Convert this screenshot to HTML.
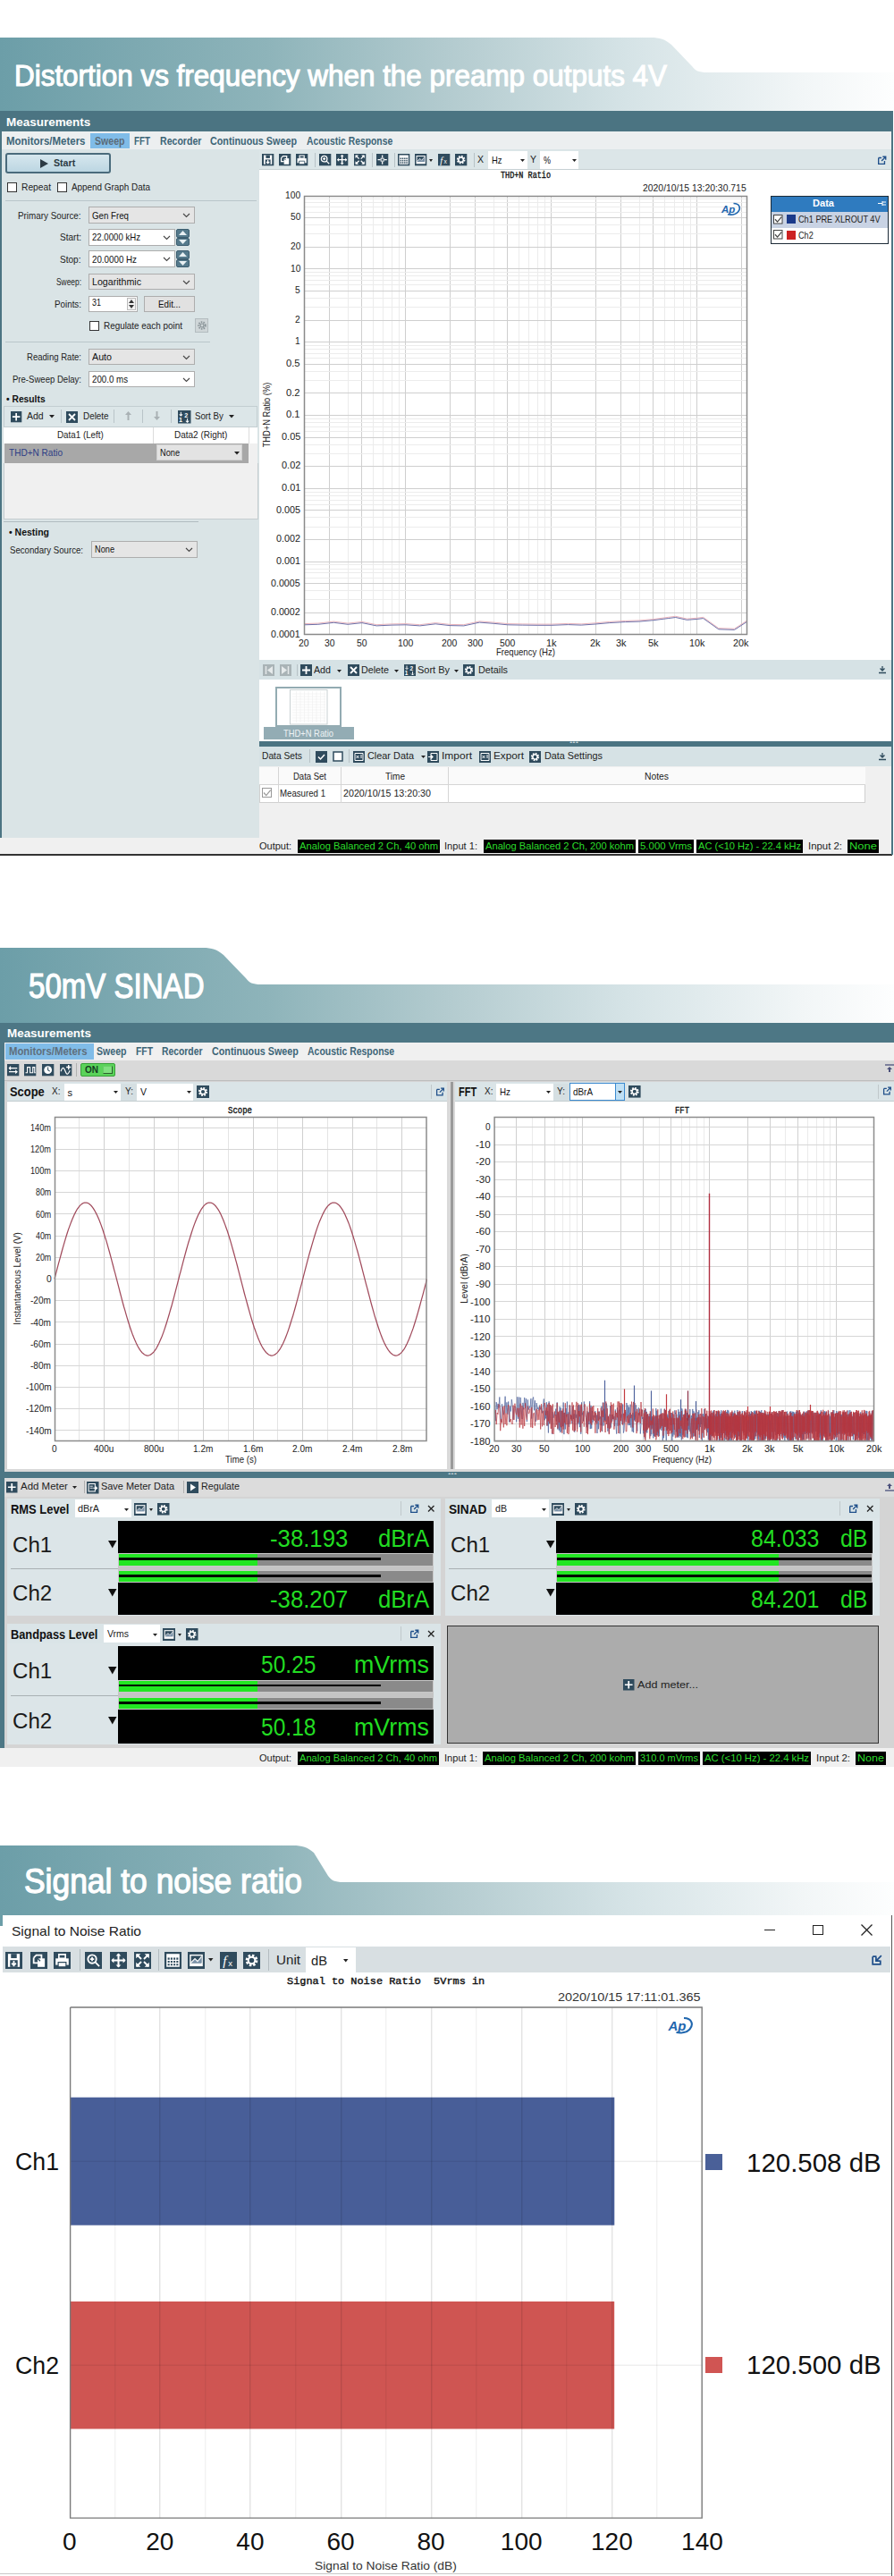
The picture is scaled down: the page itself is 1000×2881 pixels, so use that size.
<!DOCTYPE html><html><head><meta charset="utf-8"><style>
html,body{margin:0;padding:0;background:#fff;}
body{width:1000px;height:2881px;position:relative;overflow:hidden;font-family:"Liberation Sans",sans-serif;}
</style></head><body>
<svg style="position:absolute;left:0px;top:0px;overflow:visible;pointer-events:none" width="1000" height="2881" viewBox="0 0 1000 2881"><defs><linearGradient id="g1" x1="0" y1="0" x2="1000" y2="0" gradientUnits="userSpaceOnUse">
<stop offset="0" stop-color="#6c9ea8"/><stop offset="0.3" stop-color="#8eb4ba"/><stop offset="0.5" stop-color="#b3cbcf"/><stop offset="0.7" stop-color="#d5e3e6"/><stop offset="0.9" stop-color="#f2f6f7"/><stop offset="1" stop-color="#fdfefe"/></linearGradient></defs>
<path d="M0,42 L728,42 C738,42 744,44 751,50 L774,74 C778,79 781,81 791,81 L1000,81 L1000,125 L0,125 Z" fill="url(#g1)"/></svg>
<div style="position:absolute;left:16.00px;top:68.25px;font:400 33.5px 'Liberation Sans',sans-serif;line-height:1;white-space:pre;color:#fff;transform:scaleX(0.9379);transform-origin:0 0;-webkit-text-stroke:1.1px #fff;">Distortion vs frequency when the preamp outputs 4V</div>
<svg style="position:absolute;left:0px;top:0px;overflow:visible;pointer-events:none" width="1000" height="2881" viewBox="0 0 1000 2881"><defs><linearGradient id="g2" x1="0" y1="0" x2="1000" y2="0" gradientUnits="userSpaceOnUse">
<stop offset="0" stop-color="#6c9ea8"/><stop offset="0.3" stop-color="#8eb4ba"/><stop offset="0.5" stop-color="#b3cbcf"/><stop offset="0.7" stop-color="#d5e3e6"/><stop offset="0.9" stop-color="#f2f6f7"/><stop offset="1" stop-color="#fdfefe"/></linearGradient></defs>
<path d="M0,1060 L227,1060 C237,1060 243,1062 250,1068 L275,1094 C279,1099 282,1101 292,1101 L1000,1101 L1000,1145 L0,1145 Z" fill="url(#g2)"/></svg>
<div style="position:absolute;left:31.50px;top:1083.00px;font:400 39px 'Liberation Sans',sans-serif;line-height:1;white-space:pre;color:#fff;transform:scaleX(0.8473);transform-origin:0 0;-webkit-text-stroke:1.25px #fff;">50mV SINAD</div>
<svg style="position:absolute;left:0px;top:0px;overflow:visible;pointer-events:none" width="1000" height="2881" viewBox="0 0 1000 2881"><defs><linearGradient id="g3" x1="0" y1="0" x2="1000" y2="0" gradientUnits="userSpaceOnUse">
<stop offset="0" stop-color="#6c9ea8"/><stop offset="0.3" stop-color="#8eb4ba"/><stop offset="0.5" stop-color="#b3cbcf"/><stop offset="0.7" stop-color="#d5e3e6"/><stop offset="0.9" stop-color="#f2f6f7"/><stop offset="1" stop-color="#fdfefe"/></linearGradient></defs>
<path d="M0,2064 L328,2064 C338,2064 344,2066 351,2072 L367,2098 C371,2103 374,2105 384,2105 L1000,2105 L1000,2142 L0,2142 Z" fill="url(#g3)"/></svg>
<div style="position:absolute;left:27.00px;top:2084.00px;font:400 39px 'Liberation Sans',sans-serif;line-height:1;white-space:pre;color:#fff;transform:scaleX(0.9079);transform-origin:0 0;-webkit-text-stroke:1.25px #fff;">Signal to noise ratio</div>
<div style="position:absolute;left:0px;top:124px;width:998px;height:832px;background:#dae4e6;"></div>
<div style="position:absolute;left:0px;top:124px;width:998px;height:23px;background:#4b7482;"></div>
<div style="position:absolute;left:7.40px;top:130.40px;font:700 13.2px 'Liberation Sans',sans-serif;line-height:1;white-space:pre;color:#fff;transform:scaleX(1.0210);transform-origin:0 0;">Measurements</div>
<div style="position:absolute;left:2px;top:147px;width:996px;height:20px;background:#eceff0;"></div>
<div style="position:absolute;left:101.4px;top:148.5px;width:43.6px;height:17.5px;background:#80bce8;"></div>
<div style="position:absolute;left:7.20px;top:151.70px;font:700 12.2px 'Liberation Sans',sans-serif;line-height:1;white-space:pre;color:#3d6577;transform:scaleX(0.9401);transform-origin:0 0;">Monitors/Meters</div>
<div style="position:absolute;left:105.50px;top:151.70px;font:700 12.2px 'Liberation Sans',sans-serif;line-height:1;white-space:pre;color:#5b6b78;transform:scaleX(0.8673);transform-origin:0 0;">Sweep</div>
<div style="position:absolute;left:150.00px;top:151.70px;font:700 12.2px 'Liberation Sans',sans-serif;line-height:1;white-space:pre;color:#3d6577;transform:scaleX(0.8056);transform-origin:0 0;">FFT</div>
<div style="position:absolute;left:178.60px;top:151.70px;font:700 12.2px 'Liberation Sans',sans-serif;line-height:1;white-space:pre;color:#3d6577;transform:scaleX(0.8670);transform-origin:0 0;">Recorder</div>
<div style="position:absolute;left:235.00px;top:151.70px;font:700 12.2px 'Liberation Sans',sans-serif;line-height:1;white-space:pre;color:#3d6577;transform:scaleX(0.8843);transform-origin:0 0;">Continuous Sweep</div>
<div style="position:absolute;left:342.80px;top:151.70px;font:700 12.2px 'Liberation Sans',sans-serif;line-height:1;white-space:pre;color:#3d6577;transform:scaleX(0.8505);transform-origin:0 0;">Acoustic Response</div>
<div style="position:absolute;left:2px;top:167px;width:288px;height:770px;background:#dae4e6;"></div>
<div style="position:absolute;left:6px;top:171px;width:118px;height:23px;background:#c6dce6;border:2px solid #4a6b7c;box-sizing:border-box;border-radius:3px;background:linear-gradient(#d6e7ee,#bcd6e2)"></div>
<svg style="position:absolute;left:44.6px;top:178px;overflow:visible;" width="9" height="10" viewBox="0 0 9 10"><path d="M0,0L9,5L0,10z" fill="#2b3a44"/></svg>
<div style="position:absolute;left:59.70px;top:177.05px;font:700 11.5px 'Liberation Sans',sans-serif;line-height:1;white-space:pre;color:#2b3a44;transform:scaleX(0.9236);transform-origin:0 0;">Start</div>
<svg style="position:absolute;left:7.5px;top:204px;overflow:visible;" width="11" height="11" viewBox="0 0 11 11"><rect x="0.5" y="0.5" width="10" height="10" fill="#fff" stroke="#333" stroke-width="1"/></svg>
<div style="position:absolute;left:23.50px;top:204.05px;font:400 10.5px 'Liberation Sans',sans-serif;line-height:1;white-space:pre;color:#222;transform:scaleX(0.9746);transform-origin:0 0;">Repeat</div>
<svg style="position:absolute;left:63.8px;top:204px;overflow:visible;" width="11" height="11" viewBox="0 0 11 11"><rect x="0.5" y="0.5" width="10" height="10" fill="#fff" stroke="#333" stroke-width="1"/></svg>
<div style="position:absolute;left:80.00px;top:204.05px;font:400 10.5px 'Liberation Sans',sans-serif;line-height:1;white-space:pre;color:#222;transform:scaleX(0.9421);transform-origin:0 0;">Append Graph Data</div>
<div style="position:absolute;left:6px;top:224px;width:281px;height:1px;background:#b9c6ca;"></div>
<div style="position:absolute;left:20.00px;top:235.55px;font:400 10.5px 'Liberation Sans',sans-serif;line-height:1;white-space:pre;color:#222;transform:scaleX(0.9378);transform-origin:0 0;">Primary Source:</div>
<div style="position:absolute;left:99.3px;top:231.4px;width:118.7px;height:19px;background:#e5e5e5;border:1px solid #adadad;box-sizing:border-box;"></div>
<div style="position:absolute;left:103.30px;top:235.65px;font:400 10.5px 'Liberation Sans',sans-serif;line-height:1;white-space:pre;color:#111;transform:scaleX(0.9243);transform-origin:0 0;">Gen Freq</div>
<svg style="position:absolute;left:204.0px;top:238.4px;overflow:visible;" width="9" height="6" viewBox="0 0 9 6"><path d="M1,1l3.5,3.5l3.5,-3.5" fill="none" stroke="#444" stroke-width="1.1"/></svg>
<div style="position:absolute;left:66.60px;top:260.05px;font:400 10.5px 'Liberation Sans',sans-serif;line-height:1;white-space:pre;color:#222;transform:scaleX(0.9564);transform-origin:0 0;">Start:</div>
<div style="position:absolute;left:99.3px;top:256px;width:96.3px;height:19px;background:#fff;border:1px solid #adadad;box-sizing:border-box;"></div>
<div style="position:absolute;left:103.30px;top:260.25px;font:400 10.5px 'Liberation Sans',sans-serif;line-height:1;white-space:pre;color:#111;transform:scaleX(0.9157);transform-origin:0 0;">22.0000 kHz</div>
<svg style="position:absolute;left:181.6px;top:263.0px;overflow:visible;" width="9" height="6" viewBox="0 0 9 6"><path d="M1,1l3.5,3.5l3.5,-3.5" fill="none" stroke="#444" stroke-width="1.1"/></svg>
<div style="position:absolute;left:197.3px;top:256px;width:14.7px;height:9.5px;background:#557a8c;border:1px solid #3d5e70;box-sizing:border-box;border-radius:2px"></div>
<svg style="position:absolute;left:200px;top:258px;overflow:visible;" width="9" height="5" viewBox="0 0 9 5"><path d="M0,5L4.5,0L9,5z" fill="#e8f0f3"/></svg>
<div style="position:absolute;left:197.3px;top:265.5px;width:14.7px;height:9.5px;background:#557a8c;border:1px solid #3d5e70;box-sizing:border-box;border-radius:2px"></div>
<svg style="position:absolute;left:200px;top:268px;overflow:visible;" width="9" height="5" viewBox="0 0 9 5"><path d="M0,0L4.5,5L9,0z" fill="#e8f0f3"/></svg>
<div style="position:absolute;left:67.10px;top:285.25px;font:400 10.5px 'Liberation Sans',sans-serif;line-height:1;white-space:pre;color:#222;transform:scaleX(0.9580);transform-origin:0 0;">Stop:</div>
<div style="position:absolute;left:99.3px;top:280.4px;width:96.3px;height:19px;background:#fff;border:1px solid #adadad;box-sizing:border-box;"></div>
<div style="position:absolute;left:103.30px;top:284.65px;font:400 10.5px 'Liberation Sans',sans-serif;line-height:1;white-space:pre;color:#111;transform:scaleX(0.9308);transform-origin:0 0;">20.0000 Hz</div>
<svg style="position:absolute;left:181.6px;top:287.4px;overflow:visible;" width="9" height="6" viewBox="0 0 9 6"><path d="M1,1l3.5,3.5l3.5,-3.5" fill="none" stroke="#444" stroke-width="1.1"/></svg>
<div style="position:absolute;left:197.3px;top:280.4px;width:14.7px;height:9.5px;background:#557a8c;border:1px solid #3d5e70;box-sizing:border-box;border-radius:2px"></div>
<svg style="position:absolute;left:200px;top:282.4px;overflow:visible;" width="9" height="5" viewBox="0 0 9 5"><path d="M0,5L4.5,0L9,5z" fill="#e8f0f3"/></svg>
<div style="position:absolute;left:197.3px;top:289.9px;width:14.7px;height:9.5px;background:#557a8c;border:1px solid #3d5e70;box-sizing:border-box;border-radius:2px"></div>
<svg style="position:absolute;left:200px;top:292.4px;overflow:visible;" width="9" height="5" viewBox="0 0 9 5"><path d="M0,0L4.5,5L9,0z" fill="#e8f0f3"/></svg>
<div style="position:absolute;left:62.60px;top:309.75px;font:400 10.5px 'Liberation Sans',sans-serif;line-height:1;white-space:pre;color:#222;transform:scaleX(0.7993);transform-origin:0 0;">Sweep:</div>
<div style="position:absolute;left:99.3px;top:306px;width:118.7px;height:18px;background:#e5e5e5;border:1px solid #adadad;box-sizing:border-box;"></div>
<div style="position:absolute;left:103.30px;top:309.75px;font:400 10.5px 'Liberation Sans',sans-serif;line-height:1;white-space:pre;color:#111;transform:scaleX(1.0132);transform-origin:0 0;">Logarithmic</div>
<svg style="position:absolute;left:204.0px;top:312.5px;overflow:visible;" width="9" height="6" viewBox="0 0 9 6"><path d="M1,1l3.5,3.5l3.5,-3.5" fill="none" stroke="#444" stroke-width="1.1"/></svg>
<div style="position:absolute;left:60.60px;top:335.05px;font:400 10.5px 'Liberation Sans',sans-serif;line-height:1;white-space:pre;color:#222;transform:scaleX(0.9343);transform-origin:0 0;">Points:</div>
<div style="position:absolute;left:99.3px;top:331px;width:55px;height:18px;background:#fff;border:1px solid #adadad;box-sizing:border-box;"></div>
<div style="position:absolute;left:102.50px;top:333.25px;font:400 10.5px 'Liberation Sans',sans-serif;line-height:1;white-space:pre;color:#111;transform:scaleX(0.8556);transform-origin:0 0;">31</div>
<div style="position:absolute;left:142px;top:333px;width:10px;height:14px;background:#f3f3f3;border:1px solid #bbb;box-sizing:border-box;"></div>
<svg style="position:absolute;left:144px;top:335px;overflow:visible;" width="6" height="10" viewBox="0 0 6 10"><path d="M0,4L3,0L6,4zM0,6L3,10L6,6z" fill="#333"/></svg>
<div style="position:absolute;left:161px;top:331px;width:57px;height:18px;background:#e1e1e1;border:1px solid #adadad;box-sizing:border-box;"></div>
<div style="position:absolute;left:177.00px;top:334.75px;font:400 10.5px 'Liberation Sans',sans-serif;line-height:1;white-space:pre;color:#111;transform:scaleX(0.9308);transform-origin:0 0;">Edit...</div>
<svg style="position:absolute;left:99.7px;top:358.7px;overflow:visible;" width="11" height="11" viewBox="0 0 11 11"><rect x="0.5" y="0.5" width="10" height="10" fill="#fff" stroke="#333" stroke-width="1"/></svg>
<div style="position:absolute;left:115.80px;top:358.55px;font:400 10.5px 'Liberation Sans',sans-serif;line-height:1;white-space:pre;color:#222;transform:scaleX(0.9421);transform-origin:0 0;">Regulate each point</div>
<div style="position:absolute;left:217.5px;top:356px;width:15.5px;height:16px;background:#cfd6d8;border:1px solid #b3bcbf;box-sizing:border-box;"></div>
<svg style="position:absolute;left:219.5px;top:358px;overflow:visible;" width="12" height="12" viewBox="0 0 12 12"><circle cx="6" cy="6" r="3.8" fill="none" stroke="#8a9599" stroke-width="2" stroke-dasharray="1.5 1.2"/><circle cx="6" cy="6" r="2" fill="none" stroke="#8a9599" stroke-width="1.2"/></svg>
<div style="position:absolute;left:6px;top:382px;width:229px;height:1px;background:#b9c6ca;"></div>
<div style="position:absolute;left:29.60px;top:394.45px;font:400 10.5px 'Liberation Sans',sans-serif;line-height:1;white-space:pre;color:#222;transform:scaleX(0.9085);transform-origin:0 0;">Reading Rate:</div>
<div style="position:absolute;left:99.3px;top:390px;width:118.7px;height:18.4px;background:#e5e5e5;border:1px solid #adadad;box-sizing:border-box;"></div>
<div style="position:absolute;left:103.30px;top:393.95px;font:400 10.5px 'Liberation Sans',sans-serif;line-height:1;white-space:pre;color:#111;transform:scaleX(1.0181);transform-origin:0 0;">Auto</div>
<svg style="position:absolute;left:204.0px;top:396.7px;overflow:visible;" width="9" height="6" viewBox="0 0 9 6"><path d="M1,1l3.5,3.5l3.5,-3.5" fill="none" stroke="#444" stroke-width="1.1"/></svg>
<div style="position:absolute;left:13.60px;top:418.95px;font:400 10.5px 'Liberation Sans',sans-serif;line-height:1;white-space:pre;color:#222;transform:scaleX(0.9099);transform-origin:0 0;">Pre-Sweep Delay:</div>
<div style="position:absolute;left:99.3px;top:414.8px;width:118.7px;height:18.4px;background:#fff;border:1px solid #adadad;box-sizing:border-box;"></div>
<div style="position:absolute;left:103.30px;top:418.75px;font:400 10.5px 'Liberation Sans',sans-serif;line-height:1;white-space:pre;color:#111;transform:scaleX(0.9259);transform-origin:0 0;">200.0 ms</div>
<svg style="position:absolute;left:204.0px;top:421.5px;overflow:visible;" width="9" height="6" viewBox="0 0 9 6"><path d="M1,1l3.5,3.5l3.5,-3.5" fill="none" stroke="#444" stroke-width="1.1"/></svg>
<div style="position:absolute;left:6.70px;top:441.25px;font:700 11.5px 'Liberation Sans',sans-serif;line-height:1;white-space:pre;color:#111;transform:scaleX(0.8941);transform-origin:0 0;">• Results</div>
<div style="position:absolute;left:4px;top:453.6px;width:284px;height:24px;background:#dce6e8;border:1px solid #c3ced1;box-sizing:border-box;"></div>
<svg style="position:absolute;left:12px;top:459.5px;overflow:visible;" width="12.3" height="12.3" viewBox="0 0 12.3 12.3"><g transform="scale(0.9461538461538462)"><rect width="13" height="13" fill="#2f4b5d"/><path d="M6.5,2v9M2,6.5h9" stroke="#fff" stroke-width="1.8"/></g></svg>
<div style="position:absolute;left:30.00px;top:460.25px;font:400 10.5px 'Liberation Sans',sans-serif;line-height:1;white-space:pre;color:#222;">Add</div>
<svg style="position:absolute;left:55px;top:463.5px;overflow:visible;" width="6" height="3.5" viewBox="0 0 6 3.5"><path d="M0,0h6l-3.0,3.5z" fill="#222"/></svg>
<div style="position:absolute;left:67.5px;top:458px;width:1px;height:15px;background:#b9c4c8;"></div>
<svg style="position:absolute;left:74px;top:459.5px;overflow:visible;" width="13" height="13" viewBox="0 0 13 13"><g transform="scale(1.0)"><rect width="13" height="13" fill="#2f4b5d"/><path d="M3,3l7,7M10,3l-7,7" stroke="#fff" stroke-width="1.8"/></g></svg>
<div style="position:absolute;left:93.00px;top:460.25px;font:400 10.5px 'Liberation Sans',sans-serif;line-height:1;white-space:pre;color:#222;transform:scaleX(0.9420);transform-origin:0 0;">Delete</div>
<div style="position:absolute;left:126.5px;top:458px;width:1px;height:15px;background:#b9c4c8;"></div>
<svg style="position:absolute;left:139.5px;top:460px;overflow:visible;" width="7" height="10" viewBox="0 0 7 10"><path d="M3.5,0L7,4H4.5V10H2.5V4H0z" fill="#a9b1b4"/></svg>
<div style="position:absolute;left:159px;top:458px;width:1px;height:15px;background:#b9c4c8;"></div>
<svg style="position:absolute;left:172px;top:460px;overflow:visible;" width="7" height="10" viewBox="0 0 7 10"><path d="M3.5,10L7,6H4.5V0H2.5V6H0z" fill="#a9b1b4"/></svg>
<div style="position:absolute;left:191.4px;top:458px;width:1px;height:15px;background:#b9c4c8;"></div>
<svg style="position:absolute;left:198.5px;top:459px;overflow:visible;" width="14.5" height="14.5" viewBox="0 0 14.5 14.5"><g transform="scale(1.1153846153846154)"><rect width="13" height="13" fill="#2f4b5d"/><text x="0.8" y="11.5" font-family="Liberation Sans" font-size="6.5" font-weight="700" fill="#fff">1</text><text x="6.5" y="6.8" font-family="Liberation Sans" font-size="6.5" font-weight="700" fill="#fff">2</text><path d="M3,1.5v4M1.5,4l1.5,1.5l1.5,-1.5M9.5,8v4M8,10.5l1.5,1.5l1.5,-1.5" fill="none" stroke="#fff" stroke-width="0.9"/></g></svg>
<div style="position:absolute;left:218.00px;top:460.25px;font:400 10.5px 'Liberation Sans',sans-serif;line-height:1;white-space:pre;color:#222;transform:scaleX(0.9234);transform-origin:0 0;">Sort By</div>
<svg style="position:absolute;left:256px;top:463.5px;overflow:visible;" width="6" height="3.5" viewBox="0 0 6 3.5"><path d="M0,0h6l-3.0,3.5z" fill="#222"/></svg>
<div style="position:absolute;left:4px;top:477.5px;width:284px;height:18px;background:#ffffff;"></div>
<div style="position:absolute;left:171.3px;top:477.5px;width:1px;height:18px;background:#dcdcdc;"></div>
<div style="position:absolute;left:278px;top:477.5px;width:1px;height:18px;background:#dcdcdc;"></div>
<div style="position:absolute;left:64.10px;top:481.25px;font:400 10.5px 'Liberation Sans',sans-serif;line-height:1;white-space:pre;color:#222;transform:scaleX(0.9341);transform-origin:0 0;">Data1 (Left)</div>
<div style="position:absolute;left:194.60px;top:481.25px;font:400 10.5px 'Liberation Sans',sans-serif;line-height:1;white-space:pre;color:#222;transform:scaleX(0.9511);transform-origin:0 0;">Data2 (Right)</div>
<div style="position:absolute;left:4px;top:495.5px;width:284px;height:22px;background:#f0f0f0;"></div>
<div style="position:absolute;left:4.9px;top:495.5px;width:273px;height:22px;background:#a8a8a8;"></div>
<div style="position:absolute;left:10.40px;top:501.25px;font:400 10.5px 'Liberation Sans',sans-serif;line-height:1;white-space:pre;color:#2d3d86;transform:scaleX(0.9564);transform-origin:0 0;">THD+N Ratio</div>
<div style="position:absolute;left:175px;top:497.4px;width:95.8px;height:17.8px;background:#e3e3e3;border:1px solid #d0d0d0;box-sizing:border-box;"></div>
<div style="position:absolute;left:179.00px;top:501.05px;font:400 10.5px 'Liberation Sans',sans-serif;line-height:1;white-space:pre;color:#111;transform:scaleX(0.8762);transform-origin:0 0;">None</div>
<svg style="position:absolute;left:262px;top:505px;overflow:visible;" width="6" height="3.5" viewBox="0 0 6 3.5"><path d="M0,0h6l-3.0,3.5z" fill="#222"/></svg>
<div style="position:absolute;left:4px;top:517.5px;width:285px;height:63px;background:#f0f0f0;border:1px solid #c5cdd0;box-sizing:border-box;border-top:none"></div>
<div style="position:absolute;left:4px;top:583.4px;width:218px;height:1px;background:#b0bcc0;"></div>
<div style="position:absolute;left:10.00px;top:590.25px;font:700 11.5px 'Liberation Sans',sans-serif;line-height:1;white-space:pre;color:#111;transform:scaleX(0.9108);transform-origin:0 0;">• Nesting</div>
<div style="position:absolute;left:10.70px;top:610.05px;font:400 10.5px 'Liberation Sans',sans-serif;line-height:1;white-space:pre;color:#222;transform:scaleX(0.9181);transform-origin:0 0;">Secondary Source:</div>
<div style="position:absolute;left:102px;top:605px;width:118.8px;height:19px;background:#e5e5e5;border:1px solid #adadad;box-sizing:border-box;"></div>
<div style="position:absolute;left:106.00px;top:609.25px;font:400 10.5px 'Liberation Sans',sans-serif;line-height:1;white-space:pre;color:#111;transform:scaleX(0.8762);transform-origin:0 0;">None</div>
<svg style="position:absolute;left:206.8px;top:612.0px;overflow:visible;" width="9" height="6" viewBox="0 0 9 6"><path d="M1,1l3.5,3.5l3.5,-3.5" fill="none" stroke="#444" stroke-width="1.1"/></svg>
<div style="position:absolute;left:290px;top:168px;width:708px;height:22px;background:#dce6e8;"></div>
<div style="position:absolute;left:290px;top:189.3px;width:708px;height:1px;background:#c6d0d3;"></div>
<svg style="position:absolute;left:293px;top:172px;overflow:visible;" width="13.3" height="13.3" viewBox="0 0 13.3 13.3"><g transform="scale(1.0230769230769232)"><rect width="13" height="13" fill="#2f4b5d"/><path d="M2,1.5h9v10h-9z" fill="#fff"/><rect x="4.3" y="1.5" width="4.4" height="3.3" fill="#2f4b5d"/><rect x="3.6" y="6.3" width="5.8" height="5.2" fill="#2f4b5d"/><path d="M6.5,6.8v3.6M4.9,8.6l1.6,1.8l1.6,-1.8" fill="none" stroke="#fff" stroke-width="1.2"/></g></svg>
<svg style="position:absolute;left:311.7px;top:172px;overflow:visible;" width="13.3" height="13.3" viewBox="0 0 13.3 13.3"><g transform="scale(1.0230769230769232)"><rect width="13" height="13" fill="#2f4b5d"/><path d="M2.5,4.5l2,-2h4v3" fill="none" stroke="#fff" stroke-width="1.2"/><path d="M2.5,4.5v4h3" fill="none" stroke="#fff" stroke-width="1.2"/><path d="M5.5,5h5.5v6.5h-5.5z" fill="#fff"/><path d="M5.5,5l2,2" stroke="#2f4b5d" stroke-width="0.9"/></g></svg>
<svg style="position:absolute;left:331.4px;top:172px;overflow:visible;" width="13.3" height="13.3" viewBox="0 0 13.3 13.3"><g transform="scale(1.0230769230769232)"><rect width="13" height="13" fill="#2f4b5d"/><path d="M4,2h5v3h-5z" fill="none" stroke="#fff" stroke-width="1.1"/><path d="M1.5,5h10v5h-10z" fill="#fff"/><path d="M3.5,8h6v3.5h-6z" fill="#fff" stroke="#2f4b5d" stroke-width="0.8"/></g></svg>
<svg style="position:absolute;left:357px;top:172px;overflow:visible;" width="13.3" height="13.3" viewBox="0 0 13.3 13.3"><g transform="scale(1.0230769230769232)"><rect width="13" height="13" fill="#2f4b5d"/><circle cx="5.5" cy="5.5" r="3.2" fill="none" stroke="#fff" stroke-width="1.3"/><path d="M8,8l3,3M4,5.5h3M5.5,4v3" stroke="#fff" stroke-width="1.2"/></g></svg>
<svg style="position:absolute;left:376px;top:172px;overflow:visible;" width="13.3" height="13.3" viewBox="0 0 13.3 13.3"><g transform="scale(1.0230769230769232)"><rect width="13" height="13" fill="#2f4b5d"/><path d="M6.5,1.5v10M1.5,6.5h10" stroke="#fff" stroke-width="1.4"/><path d="M6.5,1l-2,2h4zM6.5,12l-2,-2h4zM1,6.5l2,-2v4zM12,6.5l-2,-2v4z" fill="#fff"/></g></svg>
<svg style="position:absolute;left:395.7px;top:172px;overflow:visible;" width="13.3" height="13.3" viewBox="0 0 13.3 13.3"><g transform="scale(1.0230769230769232)"><rect width="13" height="13" fill="#2f4b5d"/><path d="M2,2l3.5,3.5M11,2l-3.5,3.5M2,11l3.5,-3.5M11,11l-3.5,-3.5" stroke="#fff" stroke-width="1.3"/><path d="M1.5,1.5h3.5l-3.5,3.5zM11.5,1.5v3.5l-3.5,-3.5zM1.5,11.5v-3.5l3.5,3.5zM11.5,11.5h-3.5l3.5,-3.5z" fill="#fff"/></g></svg>
<svg style="position:absolute;left:420.5px;top:172px;overflow:visible;" width="13.3" height="13.3" viewBox="0 0 13.3 13.3"><g transform="scale(1.0230769230769232)"><rect width="13" height="13" fill="#2f4b5d"/><path d="M6.5,1.5v3M6.5,8.5v3M1.5,6.5h3M8.5,6.5h3" stroke="#fff" stroke-width="1.3"/><rect x="5" y="5" width="3" height="3" fill="none" stroke="#fff" stroke-width="0.9"/></g></svg>
<svg style="position:absolute;left:444.6px;top:172px;overflow:visible;" width="13.3" height="13.3" viewBox="0 0 13.3 13.3"><g transform="scale(1.0230769230769232)"><rect width="13" height="13" fill="#2f4b5d"/><path d="M2,2h9v9h-9z" fill="none" stroke="#fff" stroke-width="1"/><rect x="2" y="2" width="9" height="2.4" fill="#fff"/><path d="M2,6.4h9M2,8.6h9M4.3,4v7M6.5,4v7M8.7,4v7" stroke="#fff" stroke-width="0.8"/></g></svg>
<svg style="position:absolute;left:463.7px;top:172px;overflow:visible;" width="13.3" height="13.3" viewBox="0 0 13.3 13.3"><g transform="scale(1.0230769230769232)"><rect width="13" height="13" fill="#2f4b5d"/><rect x="1.5" y="2" width="10" height="9" fill="#fff"/><rect x="2.5" y="3" width="8" height="5.5" fill="#2f4b5d"/><path d="M2.5,8.5l3,-3l2,2l3,-3.5v4.5z" fill="#7b93aa"/><path d="M2.5,8.2l3,-3l2,2l3,-3.5" fill="none" stroke="#fff" stroke-width="0.8"/></g></svg>
<svg style="position:absolute;left:490px;top:172px;overflow:visible;" width="13.3" height="13.3" viewBox="0 0 13.3 13.3"><g transform="scale(1.0230769230769232)"><rect width="13" height="13" fill="#2f4b5d"/><text x="2.3" y="10.3" font-family="Liberation Serif" font-style="italic" font-size="10.5" fill="#fff">f</text><text x="6.3" y="10.8" font-family="Liberation Sans" font-size="6.5" fill="#fff">x</text></g></svg>
<svg style="position:absolute;left:509px;top:172px;overflow:visible;" width="13.3" height="13.3" viewBox="0 0 13.3 13.3"><g transform="scale(1.0230769230769232)"><rect width="13" height="13" fill="#2f4b5d"/><circle cx="6.5" cy="6.5" r="3.6" fill="none" stroke="#fff" stroke-width="2.2" stroke-dasharray="1.6 1.2"/><circle cx="6.5" cy="6.5" r="2.6" fill="none" stroke="#fff" stroke-width="1.4"/></g></svg>
<div style="position:absolute;left:352px;top:171px;width:1px;height:16px;background:#b7c2c6;"></div>
<div style="position:absolute;left:416px;top:171px;width:1px;height:16px;background:#b7c2c6;"></div>
<div style="position:absolute;left:441px;top:171px;width:1px;height:16px;background:#b7c2c6;"></div>
<div style="position:absolute;left:530px;top:171px;width:1px;height:16px;background:#b7c2c6;"></div>
<svg style="position:absolute;left:479.5px;top:177.5px;overflow:visible;" width="4" height="3" viewBox="0 0 4 3"><path d="M0,0h4l-2.0,3z" fill="#222"/></svg>
<div style="position:absolute;left:534.00px;top:173.00px;font:400 11px 'Liberation Sans',sans-serif;line-height:1;white-space:pre;color:#222;transform:scaleX(0.9532);transform-origin:0 0;">X</div>
<div style="position:absolute;left:546px;top:169px;width:44px;height:20px;background:#fff;"></div>
<div style="position:absolute;left:549.50px;top:173.75px;font:400 10.5px 'Liberation Sans',sans-serif;line-height:1;white-space:pre;color:#111;transform:scaleX(0.8954);transform-origin:0 0;">Hz</div>
<svg style="position:absolute;left:582px;top:178px;overflow:visible;" width="5" height="3" viewBox="0 0 5 3"><path d="M0,0h5l-2.5,3z" fill="#222"/></svg>
<div style="position:absolute;left:593.00px;top:173.00px;font:400 11px 'Liberation Sans',sans-serif;line-height:1;white-space:pre;color:#222;transform:scaleX(0.9532);transform-origin:0 0;">Y</div>
<div style="position:absolute;left:604.4px;top:169px;width:43px;height:20px;background:#fff;"></div>
<div style="position:absolute;left:607.50px;top:173.75px;font:400 10.5px 'Liberation Sans',sans-serif;line-height:1;white-space:pre;color:#111;transform:scaleX(0.8562);transform-origin:0 0;">%</div>
<svg style="position:absolute;left:640px;top:178px;overflow:visible;" width="5" height="3" viewBox="0 0 5 3"><path d="M0,0h5l-2.5,3z" fill="#222"/></svg>
<svg style="position:absolute;left:981px;top:173.6px;overflow:visible;" width="11" height="11" viewBox="0 0 11 11"><g transform="scale(0.8461538461538461)"><path d="M2,3h4M2,3v8h8v-4" fill="none" stroke="#1f4f8a" stroke-width="1.6"/><path d="M6,7l5,-5M7.5,1.5h4v4" fill="none" stroke="#1f4f8a" stroke-width="1.6"/></g></svg>
<div style="position:absolute;left:290px;top:190px;width:708px;height:548px;background:#ffffff;"></div>
<div style="position:absolute;left:559.60px;top:192.30px;font:400 10px 'Liberation Mono',sans-serif;line-height:1;white-space:pre;color:#111;transform:scaleX(0.8483);transform-origin:0 0;-webkit-text-stroke:0.35px #111;">THD+N Ratio</div>
<div style="position:absolute;left:718.50px;top:205.25px;font:400 10.5px 'Liberation Sans',sans-serif;line-height:1;white-space:pre;color:#222;transform:scaleX(0.9907);transform-origin:0 0;">2020/10/15 13:20:30.715</div>
<svg style="position:absolute;left:340px;top:219px;overflow:visible;" width="496" height="491" viewBox="0 0 496 491"><line x1="28.5" y1="0" x2="28.5" y2="491" stroke="#cfcfcf" stroke-width="1"/><line x1="49.5" y1="0" x2="49.5" y2="491" stroke="#ececec" stroke-width="1"/><line x1="64.5" y1="0" x2="64.5" y2="491" stroke="#cfcfcf" stroke-width="1"/><line x1="77.5" y1="0" x2="77.5" y2="491" stroke="#ececec" stroke-width="1"/><line x1="88.5" y1="0" x2="88.5" y2="491" stroke="#ececec" stroke-width="1"/><line x1="98.5" y1="0" x2="98.5" y2="491" stroke="#ececec" stroke-width="1"/><line x1="106.5" y1="0" x2="106.5" y2="491" stroke="#ececec" stroke-width="1"/><line x1="113.5" y1="0" x2="113.5" y2="491" stroke="#cfcfcf" stroke-width="1"/><line x1="163.5" y1="0" x2="163.5" y2="491" stroke="#cfcfcf" stroke-width="1"/><line x1="191.5" y1="0" x2="191.5" y2="491" stroke="#cfcfcf" stroke-width="1"/><line x1="212.5" y1="0" x2="212.5" y2="491" stroke="#ececec" stroke-width="1"/><line x1="227.5" y1="0" x2="227.5" y2="491" stroke="#cfcfcf" stroke-width="1"/><line x1="240.5" y1="0" x2="240.5" y2="491" stroke="#ececec" stroke-width="1"/><line x1="251.5" y1="0" x2="251.5" y2="491" stroke="#ececec" stroke-width="1"/><line x1="261.5" y1="0" x2="261.5" y2="491" stroke="#ececec" stroke-width="1"/><line x1="269.5" y1="0" x2="269.5" y2="491" stroke="#ececec" stroke-width="1"/><line x1="276.5" y1="0" x2="276.5" y2="491" stroke="#cfcfcf" stroke-width="1"/><line x1="326.5" y1="0" x2="326.5" y2="491" stroke="#cfcfcf" stroke-width="1"/><line x1="354.5" y1="0" x2="354.5" y2="491" stroke="#cfcfcf" stroke-width="1"/><line x1="375.5" y1="0" x2="375.5" y2="491" stroke="#ececec" stroke-width="1"/><line x1="390.5" y1="0" x2="390.5" y2="491" stroke="#cfcfcf" stroke-width="1"/><line x1="403.5" y1="0" x2="403.5" y2="491" stroke="#ececec" stroke-width="1"/><line x1="414.5" y1="0" x2="414.5" y2="491" stroke="#ececec" stroke-width="1"/><line x1="424.5" y1="0" x2="424.5" y2="491" stroke="#ececec" stroke-width="1"/><line x1="432.5" y1="0" x2="432.5" y2="491" stroke="#ececec" stroke-width="1"/><line x1="439.5" y1="0" x2="439.5" y2="491" stroke="#cfcfcf" stroke-width="1"/><line x1="489.5" y1="0" x2="489.5" y2="491" stroke="#cfcfcf" stroke-width="1"/><line x1="0" y1="466.5" x2="496" y2="466.5" stroke="#cfcfcf" stroke-width="1"/><line x1="0" y1="451.5" x2="496" y2="451.5" stroke="#ececec" stroke-width="1"/><line x1="0" y1="441.5" x2="496" y2="441.5" stroke="#ececec" stroke-width="1"/><line x1="0" y1="433.5" x2="496" y2="433.5" stroke="#cfcfcf" stroke-width="1"/><line x1="0" y1="427.5" x2="496" y2="427.5" stroke="#ececec" stroke-width="1"/><line x1="0" y1="421.5" x2="496" y2="421.5" stroke="#ececec" stroke-width="1"/><line x1="0" y1="417.5" x2="496" y2="417.5" stroke="#ececec" stroke-width="1"/><line x1="0" y1="412.5" x2="496" y2="412.5" stroke="#ececec" stroke-width="1"/><line x1="0" y1="409.5" x2="496" y2="409.5" stroke="#cfcfcf" stroke-width="1"/><line x1="0" y1="384.5" x2="496" y2="384.5" stroke="#cfcfcf" stroke-width="1"/><line x1="0" y1="370.5" x2="496" y2="370.5" stroke="#ececec" stroke-width="1"/><line x1="0" y1="359.5" x2="496" y2="359.5" stroke="#ececec" stroke-width="1"/><line x1="0" y1="351.5" x2="496" y2="351.5" stroke="#cfcfcf" stroke-width="1"/><line x1="0" y1="345.5" x2="496" y2="345.5" stroke="#ececec" stroke-width="1"/><line x1="0" y1="340.5" x2="496" y2="340.5" stroke="#ececec" stroke-width="1"/><line x1="0" y1="335.5" x2="496" y2="335.5" stroke="#ececec" stroke-width="1"/><line x1="0" y1="331.5" x2="496" y2="331.5" stroke="#ececec" stroke-width="1"/><line x1="0" y1="327.5" x2="496" y2="327.5" stroke="#cfcfcf" stroke-width="1"/><line x1="0" y1="302.5" x2="496" y2="302.5" stroke="#cfcfcf" stroke-width="1"/><line x1="0" y1="288.5" x2="496" y2="288.5" stroke="#ececec" stroke-width="1"/><line x1="0" y1="278.5" x2="496" y2="278.5" stroke="#ececec" stroke-width="1"/><line x1="0" y1="270.5" x2="496" y2="270.5" stroke="#cfcfcf" stroke-width="1"/><line x1="0" y1="263.5" x2="496" y2="263.5" stroke="#ececec" stroke-width="1"/><line x1="0" y1="258.5" x2="496" y2="258.5" stroke="#ececec" stroke-width="1"/><line x1="0" y1="253.5" x2="496" y2="253.5" stroke="#ececec" stroke-width="1"/><line x1="0" y1="249.5" x2="496" y2="249.5" stroke="#ececec" stroke-width="1"/><line x1="0" y1="245.5" x2="496" y2="245.5" stroke="#cfcfcf" stroke-width="1"/><line x1="0" y1="220.5" x2="496" y2="220.5" stroke="#cfcfcf" stroke-width="1"/><line x1="0" y1="206.5" x2="496" y2="206.5" stroke="#ececec" stroke-width="1"/><line x1="0" y1="196.5" x2="496" y2="196.5" stroke="#ececec" stroke-width="1"/><line x1="0" y1="188.5" x2="496" y2="188.5" stroke="#cfcfcf" stroke-width="1"/><line x1="0" y1="181.5" x2="496" y2="181.5" stroke="#ececec" stroke-width="1"/><line x1="0" y1="176.5" x2="496" y2="176.5" stroke="#ececec" stroke-width="1"/><line x1="0" y1="171.5" x2="496" y2="171.5" stroke="#ececec" stroke-width="1"/><line x1="0" y1="167.5" x2="496" y2="167.5" stroke="#ececec" stroke-width="1"/><line x1="0" y1="163.5" x2="496" y2="163.5" stroke="#cfcfcf" stroke-width="1"/><line x1="0" y1="139.5" x2="496" y2="139.5" stroke="#cfcfcf" stroke-width="1"/><line x1="0" y1="124.5" x2="496" y2="124.5" stroke="#ececec" stroke-width="1"/><line x1="0" y1="114.5" x2="496" y2="114.5" stroke="#ececec" stroke-width="1"/><line x1="0" y1="106.5" x2="496" y2="106.5" stroke="#cfcfcf" stroke-width="1"/><line x1="0" y1="99.5" x2="496" y2="99.5" stroke="#ececec" stroke-width="1"/><line x1="0" y1="94.5" x2="496" y2="94.5" stroke="#ececec" stroke-width="1"/><line x1="0" y1="89.5" x2="496" y2="89.5" stroke="#ececec" stroke-width="1"/><line x1="0" y1="85.5" x2="496" y2="85.5" stroke="#ececec" stroke-width="1"/><line x1="0" y1="81.5" x2="496" y2="81.5" stroke="#cfcfcf" stroke-width="1"/><line x1="0" y1="57.5" x2="496" y2="57.5" stroke="#cfcfcf" stroke-width="1"/><line x1="0" y1="42.5" x2="496" y2="42.5" stroke="#ececec" stroke-width="1"/><line x1="0" y1="32.5" x2="496" y2="32.5" stroke="#ececec" stroke-width="1"/><line x1="0" y1="24.5" x2="496" y2="24.5" stroke="#cfcfcf" stroke-width="1"/><line x1="0" y1="18.5" x2="496" y2="18.5" stroke="#ececec" stroke-width="1"/><line x1="0" y1="12.5" x2="496" y2="12.5" stroke="#ececec" stroke-width="1"/><line x1="0" y1="7.5" x2="496" y2="7.5" stroke="#ececec" stroke-width="1"/><line x1="0" y1="3.5" x2="496" y2="3.5" stroke="#ececec" stroke-width="1"/><polyline points="0.0,478.6 15.8,478.1 33.3,476.1 49.1,478.1 64.9,476.4 81.2,479.7 98.1,478.9 113.9,478.6 129.7,479.7 147.2,477.6 163.0,479.4 178.8,479.7 196.3,475.9 212.1,477.1 227.9,478.6 244.2,478.9 261.1,479.1 276.9,479.1 295.5,478.4 310.2,478.9 326.0,477.8 341.8,476.4 359.3,475.4 375.1,474.9 390.9,473.5 407.2,471.4 415.7,470.3 428.4,473.1 439.9,472.2 446.7,471.4 463.8,483.6 481.5,484.2 495.1,475.4" fill="none" stroke="#e9b3bb" stroke-width="1"/><polyline points="0.0,479.8 15.8,479.3 33.3,477.3 49.1,479.3 64.9,477.6 81.2,480.9 98.1,480.1 113.9,479.8 129.7,480.9 147.2,478.8 163.0,480.6 178.8,480.9 196.3,477.1 212.1,478.3 227.9,479.8 244.2,480.1 261.1,480.3 276.9,480.3 295.5,479.6 310.2,480.1 326.0,479.0 341.8,477.6 359.3,476.6 375.1,476.1 390.9,474.7 407.2,472.6 415.7,471.5 428.4,474.3 439.9,473.4 446.7,472.6 463.8,484.8 481.5,485.4 495.1,476.6" fill="none" stroke="#6d70a8" stroke-width="1"/><rect x="0.5" y="0.5" width="495" height="490" fill="none" stroke="#8a8a8a" stroke-width="1.5"/></svg>
<div style="position:absolute;left:318.90px;top:212.75px;font:400 10.5px 'Liberation Sans',sans-serif;line-height:1;white-space:pre;color:#222;transform:scaleX(0.9754);transform-origin:0 0;">100</div>
<div style="position:absolute;left:324.60px;top:237.38px;font:400 10.5px 'Liberation Sans',sans-serif;line-height:1;white-space:pre;color:#222;transform:scaleX(0.9754);transform-origin:0 0;">50</div>
<div style="position:absolute;left:324.60px;top:269.95px;font:400 10.5px 'Liberation Sans',sans-serif;line-height:1;white-space:pre;color:#222;transform:scaleX(0.9754);transform-origin:0 0;">20</div>
<div style="position:absolute;left:324.60px;top:294.58px;font:400 10.5px 'Liberation Sans',sans-serif;line-height:1;white-space:pre;color:#222;transform:scaleX(0.9754);transform-origin:0 0;">10</div>
<div style="position:absolute;left:330.30px;top:319.22px;font:400 10.5px 'Liberation Sans',sans-serif;line-height:1;white-space:pre;color:#222;transform:scaleX(0.9754);transform-origin:0 0;">5</div>
<div style="position:absolute;left:330.30px;top:351.78px;font:400 10.5px 'Liberation Sans',sans-serif;line-height:1;white-space:pre;color:#222;transform:scaleX(0.9754);transform-origin:0 0;">2</div>
<div style="position:absolute;left:330.30px;top:376.42px;font:400 10.5px 'Liberation Sans',sans-serif;line-height:1;white-space:pre;color:#222;transform:scaleX(0.9754);transform-origin:0 0;">1</div>
<div style="position:absolute;left:320.40px;top:401.05px;font:400 10.5px 'Liberation Sans',sans-serif;line-height:1;white-space:pre;color:#222;transform:scaleX(1.0678);transform-origin:0 0;">0.5</div>
<div style="position:absolute;left:320.40px;top:433.62px;font:400 10.5px 'Liberation Sans',sans-serif;line-height:1;white-space:pre;color:#222;transform:scaleX(1.0678);transform-origin:0 0;">0.2</div>
<div style="position:absolute;left:320.40px;top:458.25px;font:400 10.5px 'Liberation Sans',sans-serif;line-height:1;white-space:pre;color:#222;transform:scaleX(1.0678);transform-origin:0 0;">0.1</div>
<div style="position:absolute;left:314.70px;top:482.88px;font:400 10.5px 'Liberation Sans',sans-serif;line-height:1;white-space:pre;color:#222;transform:scaleX(1.0422);transform-origin:0 0;">0.05</div>
<div style="position:absolute;left:314.70px;top:515.45px;font:400 10.5px 'Liberation Sans',sans-serif;line-height:1;white-space:pre;color:#222;transform:scaleX(1.0422);transform-origin:0 0;">0.02</div>
<div style="position:absolute;left:314.70px;top:540.08px;font:400 10.5px 'Liberation Sans',sans-serif;line-height:1;white-space:pre;color:#222;transform:scaleX(1.0422);transform-origin:0 0;">0.01</div>
<div style="position:absolute;left:309.00px;top:564.72px;font:400 10.5px 'Liberation Sans',sans-serif;line-height:1;white-space:pre;color:#222;transform:scaleX(1.0273);transform-origin:0 0;">0.005</div>
<div style="position:absolute;left:309.00px;top:597.28px;font:400 10.5px 'Liberation Sans',sans-serif;line-height:1;white-space:pre;color:#222;transform:scaleX(1.0273);transform-origin:0 0;">0.002</div>
<div style="position:absolute;left:309.00px;top:621.92px;font:400 10.5px 'Liberation Sans',sans-serif;line-height:1;white-space:pre;color:#222;transform:scaleX(1.0273);transform-origin:0 0;">0.001</div>
<div style="position:absolute;left:303.30px;top:646.55px;font:400 10.5px 'Liberation Sans',sans-serif;line-height:1;white-space:pre;color:#222;transform:scaleX(1.0179);transform-origin:0 0;">0.0005</div>
<div style="position:absolute;left:303.30px;top:679.12px;font:400 10.5px 'Liberation Sans',sans-serif;line-height:1;white-space:pre;color:#222;transform:scaleX(1.0179);transform-origin:0 0;">0.0002</div>
<div style="position:absolute;left:303.30px;top:703.75px;font:400 10.5px 'Liberation Sans',sans-serif;line-height:1;white-space:pre;color:#222;transform:scaleX(1.0179);transform-origin:0 0;">0.0001</div>
<div style="position:absolute;left:334.20px;top:714.15px;font:400 10.5px 'Liberation Sans',sans-serif;line-height:1;white-space:pre;color:#222;transform:scaleX(0.9925);transform-origin:0 0;">20</div>
<div style="position:absolute;left:362.90px;top:714.15px;font:400 10.5px 'Liberation Sans',sans-serif;line-height:1;white-space:pre;color:#222;transform:scaleX(0.9925);transform-origin:0 0;">30</div>
<div style="position:absolute;left:399.06px;top:714.15px;font:400 10.5px 'Liberation Sans',sans-serif;line-height:1;white-space:pre;color:#222;transform:scaleX(0.9925);transform-origin:0 0;">50</div>
<div style="position:absolute;left:445.23px;top:714.15px;font:400 10.5px 'Liberation Sans',sans-serif;line-height:1;white-space:pre;color:#222;transform:scaleX(0.9925);transform-origin:0 0;">100</div>
<div style="position:absolute;left:494.30px;top:714.15px;font:400 10.5px 'Liberation Sans',sans-serif;line-height:1;white-space:pre;color:#222;transform:scaleX(0.9925);transform-origin:0 0;">200</div>
<div style="position:absolute;left:523.00px;top:714.15px;font:400 10.5px 'Liberation Sans',sans-serif;line-height:1;white-space:pre;color:#222;transform:scaleX(0.9925);transform-origin:0 0;">300</div>
<div style="position:absolute;left:559.16px;top:714.15px;font:400 10.5px 'Liberation Sans',sans-serif;line-height:1;white-space:pre;color:#222;transform:scaleX(0.9925);transform-origin:0 0;">500</div>
<div style="position:absolute;left:611.13px;top:714.15px;font:400 10.5px 'Liberation Sans',sans-serif;line-height:1;white-space:pre;color:#222;transform:scaleX(1.0456);transform-origin:0 0;">1k</div>
<div style="position:absolute;left:660.20px;top:714.15px;font:400 10.5px 'Liberation Sans',sans-serif;line-height:1;white-space:pre;color:#222;transform:scaleX(1.0456);transform-origin:0 0;">2k</div>
<div style="position:absolute;left:688.90px;top:714.15px;font:400 10.5px 'Liberation Sans',sans-serif;line-height:1;white-space:pre;color:#222;transform:scaleX(1.0456);transform-origin:0 0;">3k</div>
<div style="position:absolute;left:725.06px;top:714.15px;font:400 10.5px 'Liberation Sans',sans-serif;line-height:1;white-space:pre;color:#222;transform:scaleX(1.0456);transform-origin:0 0;">5k</div>
<div style="position:absolute;left:771.23px;top:714.15px;font:400 10.5px 'Liberation Sans',sans-serif;line-height:1;white-space:pre;color:#222;transform:scaleX(1.0273);transform-origin:0 0;">10k</div>
<div style="position:absolute;left:820.30px;top:714.15px;font:400 10.5px 'Liberation Sans',sans-serif;line-height:1;white-space:pre;color:#222;transform:scaleX(1.0273);transform-origin:0 0;">20k</div>
<div style="position:absolute;left:554.60px;top:724.45px;font:400 10.5px 'Liberation Sans',sans-serif;line-height:1;white-space:pre;color:#222;transform:scaleX(0.9121);transform-origin:0 0;">Frequency (Hz)</div>
<div style="position:absolute;left:199px;top:458.5px;width:200px;height:10px;text-align:center;font:400 10px 'Liberation Sans';line-height:10px;color:#222;white-space:pre;transform:rotate(-90deg) scaleX(0.93);transform-origin:100px 5px;">THD+N Ratio (%)</div>
<svg style="position:absolute;left:806px;top:226px;overflow:visible;" width="23" height="15" viewBox="0 0 23 15"><path d="M14.5,1.5 C21.5,1.5 23,7 19.5,11 C17,13.8 12,14.5 8,13.8" fill="none" stroke="#1f66ae" stroke-width="1.6"/><text x="1" y="12" font-family="Liberation Sans" font-style="italic" font-weight="700" font-size="11.5" fill="#1f66ae">Ap</text></svg>
<div style="position:absolute;left:862.4px;top:219px;width:131.6px;height:53.5px;background:#fff;border:1px solid #1c2a36;box-sizing:border-box;"></div>
<div style="position:absolute;left:863.4px;top:220px;width:129.6px;height:17px;background:#2f7bbf;"></div>
<div style="position:absolute;left:908.80px;top:222.30px;font:700 11px 'Liberation Sans',sans-serif;line-height:1;white-space:pre;color:#fff;transform:scaleX(1.0066);transform-origin:0 0;">Data</div>
<svg style="position:absolute;left:982px;top:224px;overflow:visible;" width="9" height="7" viewBox="0 0 9 7"><path d="M0,3.5h5M5,1v5M5,2h4M5,5h4" stroke="#fff" stroke-width="1"/></svg>
<div style="position:absolute;left:863.4px;top:237px;width:129.6px;height:17.5px;background:#c9d3e4;"></div>
<svg style="position:absolute;left:865px;top:239.7px;overflow:visible;" width="10.5" height="10.5" viewBox="0 0 10.5 10.5"><rect x="0.5" y="0.5" width="9.5" height="9.5" fill="#fff" stroke="#444" stroke-width="1"/><path d="M2,5.25l2.625,2.9400000000000004l4.7250000000000005,-5.775" fill="none" stroke="#444" stroke-width="1.2"/></svg>
<div style="position:absolute;left:879.5px;top:240px;width:10.3px;height:10px;background:#1a3a8a;"></div>
<div style="position:absolute;left:893.00px;top:240.05px;font:400 10.5px 'Liberation Sans',sans-serif;line-height:1;white-space:pre;color:#222;transform:scaleX(0.8736);transform-origin:0 0;">Ch1 PRE XLROUT 4V</div>
<svg style="position:absolute;left:865px;top:257.4px;overflow:visible;" width="10.5" height="10.5" viewBox="0 0 10.5 10.5"><rect x="0.5" y="0.5" width="9.5" height="9.5" fill="#fff" stroke="#444" stroke-width="1"/><path d="M2,5.25l2.625,2.9400000000000004l4.7250000000000005,-5.775" fill="none" stroke="#444" stroke-width="1.2"/></svg>
<div style="position:absolute;left:879.5px;top:257.5px;width:10.3px;height:10px;background:#cc2222;"></div>
<div style="position:absolute;left:893.00px;top:257.55px;font:400 10.5px 'Liberation Sans',sans-serif;line-height:1;white-space:pre;color:#222;transform:scaleX(0.8668);transform-origin:0 0;">Ch2</div>
<div style="position:absolute;left:290px;top:738px;width:708px;height:22px;background:#d6e2e5;"></div>
<div style="position:absolute;left:294px;top:743px;width:13px;height:13px;background:#a9b3b6;border:none;box-sizing:border-box;"></div>
<svg style="position:absolute;left:296px;top:745px;overflow:visible;" width="9" height="9" viewBox="0 0 9 9"><path d="M1.5,0v9" stroke="#e6eaeb" stroke-width="1.5"/><path d="M9,0v9L3,4.5z" fill="#e6eaeb"/></svg>
<div style="position:absolute;left:313px;top:743px;width:13px;height:13px;background:#a9b3b6;border:none;box-sizing:border-box;"></div>
<svg style="position:absolute;left:315px;top:745px;overflow:visible;" width="9" height="9" viewBox="0 0 9 9"><path d="M7.5,0v9" stroke="#e6eaeb" stroke-width="1.5"/><path d="M0,0v9L6,4.5z" fill="#e6eaeb"/></svg>
<div style="position:absolute;left:332px;top:743px;width:1px;height:13px;background:#b7c2c6;"></div>
<svg style="position:absolute;left:336px;top:743px;overflow:visible;" width="13" height="13" viewBox="0 0 13 13"><g transform="scale(1.0)"><rect width="13" height="13" fill="#2f4b5d"/><path d="M6.5,2v9M2,6.5h9" stroke="#fff" stroke-width="1.8"/></g></svg>
<div style="position:absolute;left:351.00px;top:744.00px;font:400 11px 'Liberation Sans',sans-serif;line-height:1;white-space:pre;color:#222;transform:scaleX(0.9705);transform-origin:0 0;">Add</div>
<svg style="position:absolute;left:377px;top:748.5px;overflow:visible;" width="5" height="3" viewBox="0 0 5 3"><path d="M0,0h5l-2.5,3z" fill="#222"/></svg>
<svg style="position:absolute;left:388.5px;top:743px;overflow:visible;" width="13" height="13" viewBox="0 0 13 13"><g transform="scale(1.0)"><rect width="13" height="13" fill="#2f4b5d"/><path d="M3,3l7,7M10,3l-7,7" stroke="#fff" stroke-width="1.8"/></g></svg>
<div style="position:absolute;left:404.00px;top:744.00px;font:400 11px 'Liberation Sans',sans-serif;line-height:1;white-space:pre;color:#222;transform:scaleX(0.9749);transform-origin:0 0;">Delete</div>
<svg style="position:absolute;left:441px;top:748.5px;overflow:visible;" width="5" height="3" viewBox="0 0 5 3"><path d="M0,0h5l-2.5,3z" fill="#222"/></svg>
<svg style="position:absolute;left:451.5px;top:743px;overflow:visible;" width="13" height="13" viewBox="0 0 13 13"><g transform="scale(1.0)"><rect width="13" height="13" fill="#2f4b5d"/><text x="0.8" y="11.5" font-family="Liberation Sans" font-size="6.5" font-weight="700" fill="#fff">1</text><text x="6.5" y="6.8" font-family="Liberation Sans" font-size="6.5" font-weight="700" fill="#fff">2</text><path d="M3,1.5v4M1.5,4l1.5,1.5l1.5,-1.5M9.5,8v4M8,10.5l1.5,1.5l1.5,-1.5" fill="none" stroke="#fff" stroke-width="0.9"/></g></svg>
<div style="position:absolute;left:467.00px;top:744.00px;font:400 11px 'Liberation Sans',sans-serif;line-height:1;white-space:pre;color:#222;">Sort By</div>
<svg style="position:absolute;left:508px;top:748.5px;overflow:visible;" width="5" height="3" viewBox="0 0 5 3"><path d="M0,0h5l-2.5,3z" fill="#222"/></svg>
<svg style="position:absolute;left:518px;top:743px;overflow:visible;" width="13" height="13" viewBox="0 0 13 13"><g transform="scale(1.0)"><rect width="13" height="13" fill="#2f4b5d"/><circle cx="6.5" cy="6.5" r="3.6" fill="none" stroke="#fff" stroke-width="2.2" stroke-dasharray="1.6 1.2"/><circle cx="6.5" cy="6.5" r="2.6" fill="none" stroke="#fff" stroke-width="1.4"/></g></svg>
<div style="position:absolute;left:535.00px;top:744.00px;font:400 11px 'Liberation Sans',sans-serif;line-height:1;white-space:pre;color:#222;transform:scaleX(0.9814);transform-origin:0 0;">Details</div>
<svg style="position:absolute;left:982px;top:744px;overflow:visible;" width="10" height="10" viewBox="0 0 10 10"><path d="M5,1v5M2.5,3.5L5,6L7.5,3.5M1,8.5h8" fill="none" stroke="#2f4b5d" stroke-width="1.3"/></svg>
<div style="position:absolute;left:290px;top:760px;width:708px;height:69px;background:#ffffff;"></div>
<div style="position:absolute;left:308.2px;top:768.4px;width:73.4px;height:44.5px;background:#ffffff;border:2px solid #93abb2;box-sizing:border-box;"></div>
<svg style="position:absolute;left:324.4px;top:771px;overflow:visible;" width="42.5" height="39.5" viewBox="0 0 42.5 39.5"><rect x="0.5" y="0.5" width="41.5" height="38.5" fill="#fff" stroke="#c8d0d2"/><line x1="7.5" y1="2" x2="7.5" y2="37" stroke="#eee" stroke-width="0.6"/><line x1="12.0" y1="2" x2="12.0" y2="37" stroke="#eee" stroke-width="0.6"/><line x1="16.5" y1="2" x2="16.5" y2="37" stroke="#eee" stroke-width="0.6"/><line x1="21.0" y1="2" x2="21.0" y2="37" stroke="#eee" stroke-width="0.6"/><line x1="25.5" y1="2" x2="25.5" y2="37" stroke="#eee" stroke-width="0.6"/><line x1="30.0" y1="2" x2="30.0" y2="37" stroke="#eee" stroke-width="0.6"/><line x1="34.5" y1="2" x2="34.5" y2="37" stroke="#eee" stroke-width="0.6"/><line x1="39.0" y1="2" x2="39.0" y2="37" stroke="#eee" stroke-width="0.6"/><line x1="3" y1="5" x2="40" y2="5" stroke="#eee" stroke-width="0.6"/><line x1="3" y1="8" x2="40" y2="8" stroke="#eee" stroke-width="0.6"/><line x1="3" y1="11" x2="40" y2="11" stroke="#eee" stroke-width="0.6"/><line x1="3" y1="14" x2="40" y2="14" stroke="#eee" stroke-width="0.6"/><line x1="3" y1="17" x2="40" y2="17" stroke="#eee" stroke-width="0.6"/><line x1="3" y1="20" x2="40" y2="20" stroke="#eee" stroke-width="0.6"/><line x1="3" y1="23" x2="40" y2="23" stroke="#eee" stroke-width="0.6"/><line x1="3" y1="26" x2="40" y2="26" stroke="#eee" stroke-width="0.6"/><line x1="3" y1="29" x2="40" y2="29" stroke="#eee" stroke-width="0.6"/><line x1="3" y1="32" x2="40" y2="32" stroke="#eee" stroke-width="0.6"/><line x1="3" y1="35" x2="40" y2="35" stroke="#eee" stroke-width="0.6"/></svg>
<div style="position:absolute;left:294.7px;top:813px;width:101.1px;height:14.4px;background:#93acb4;"></div>
<div style="position:absolute;left:317.00px;top:815.25px;font:400 10.5px 'Liberation Sans',sans-serif;line-height:1;white-space:pre;color:#eef3f4;transform:scaleX(0.8927);transform-origin:0 0;">THD+N Ratio</div>
<div style="position:absolute;left:290px;top:829px;width:708px;height:6px;background:#4b7482;"></div>
<div style="position:absolute;left:637.00px;top:827.00px;font:400 6px 'Liberation Sans',sans-serif;line-height:1;white-space:pre;color:#c8d6db;transform:scaleX(1.5842);transform-origin:0 0;">•••</div>
<div style="position:absolute;left:290px;top:835px;width:708px;height:22px;background:#d6e2e5;"></div>
<div style="position:absolute;left:293.00px;top:840.00px;font:400 11px 'Liberation Sans',sans-serif;line-height:1;white-space:pre;color:#222;transform:scaleX(0.9314);transform-origin:0 0;">Data Sets</div>
<div style="position:absolute;left:346px;top:838px;width:1px;height:15px;background:#b7c2c6;"></div>
<svg style="position:absolute;left:353px;top:840px;overflow:visible;" width="13" height="13" viewBox="0 0 13 13"><rect width="13" height="13" fill="#2f4b5d"/><path d="M3,6.5l2.5,2.5l4.5,-5" fill="none" stroke="#fff" stroke-width="1.5"/></svg>
<svg style="position:absolute;left:372px;top:840px;overflow:visible;" width="12" height="12" viewBox="0 0 12 12"><rect x="1" y="1" width="10" height="10" fill="#fff" stroke="#2f4b5d" stroke-width="1.5"/></svg>
<div style="position:absolute;left:390px;top:838px;width:1px;height:15px;background:#b7c2c6;"></div>
<svg style="position:absolute;left:395px;top:840px;overflow:visible;" width="13" height="13" viewBox="0 0 13 13"><g transform="scale(1.0)"><rect width="13" height="13" fill="#2f4b5d"/><path d="M2,2.5h9v8h-9z" fill="none" stroke="#fff" stroke-width="1"/><path d="M3.5,5l3,3M6.5,5l-3,3M8,5h2M8,7h2" stroke="#fff" stroke-width="1"/></g></svg>
<div style="position:absolute;left:411.00px;top:840.00px;font:400 11px 'Liberation Sans',sans-serif;line-height:1;white-space:pre;color:#222;transform:scaleX(0.9890);transform-origin:0 0;">Clear Data</div>
<svg style="position:absolute;left:471px;top:845px;overflow:visible;" width="5" height="3" viewBox="0 0 5 3"><path d="M0,0h5l-2.5,3z" fill="#222"/></svg>
<svg style="position:absolute;left:478px;top:840px;overflow:visible;" width="13" height="13" viewBox="0 0 13 13"><g transform="scale(1.0)"><rect width="13" height="13" fill="#2f4b5d"/><path d="M4,2.5h7v8h-7z" fill="none" stroke="#fff" stroke-width="1"/><path d="M1,6.5h5M4,4.5l2,2l-2,2" fill="none" stroke="#fff" stroke-width="1.2"/></g></svg>
<div style="position:absolute;left:494.00px;top:840.00px;font:400 11px 'Liberation Sans',sans-serif;line-height:1;white-space:pre;color:#222;transform:scaleX(1.0902);transform-origin:0 0;">Import</div>
<svg style="position:absolute;left:536px;top:840px;overflow:visible;" width="13" height="13" viewBox="0 0 13 13"><g transform="scale(1.0)"><rect width="13" height="13" fill="#2f4b5d"/><path d="M2,2.5h9v8h-9z" fill="none" stroke="#fff" stroke-width="1"/><path d="M3.5,5l3,3M6.5,5l-3,3M8,5h2M8,7h2" stroke="#fff" stroke-width="1"/></g></svg>
<div style="position:absolute;left:552.00px;top:840.00px;font:400 11px 'Liberation Sans',sans-serif;line-height:1;white-space:pre;color:#222;transform:scaleX(1.0693);transform-origin:0 0;">Export</div>
<svg style="position:absolute;left:592px;top:840px;overflow:visible;" width="13" height="13" viewBox="0 0 13 13"><g transform="scale(1.0)"><rect width="13" height="13" fill="#2f4b5d"/><circle cx="6.5" cy="6.5" r="3.6" fill="none" stroke="#fff" stroke-width="2.2" stroke-dasharray="1.6 1.2"/><circle cx="6.5" cy="6.5" r="2.6" fill="none" stroke="#fff" stroke-width="1.4"/></g></svg>
<div style="position:absolute;left:609.00px;top:840.00px;font:400 11px 'Liberation Sans',sans-serif;line-height:1;white-space:pre;color:#222;transform:scaleX(0.9841);transform-origin:0 0;">Data Settings</div>
<svg style="position:absolute;left:982px;top:841px;overflow:visible;" width="10" height="10" viewBox="0 0 10 10"><path d="M5,1v5M2.5,3.5L5,6L7.5,3.5M1,8.5h8" fill="none" stroke="#2f4b5d" stroke-width="1.3"/></svg>
<div style="position:absolute;left:290px;top:857px;width:708px;height:80px;background:#f0f0f0;"></div>
<div style="position:absolute;left:290px;top:858px;width:678px;height:40px;background:#fff;border:1px solid #d0d0d0;box-sizing:border-box;"></div>
<div style="position:absolute;left:290px;top:877px;width:678px;height:1px;background:#d5d5d5;"></div>
<div style="position:absolute;left:290px;top:858px;width:678px;height:19px;background:#fafafa;"></div>
<div style="position:absolute;left:311px;top:858px;width:1px;height:40px;background:#d5d5d5;"></div>
<div style="position:absolute;left:381px;top:858px;width:1px;height:40px;background:#d5d5d5;"></div>
<div style="position:absolute;left:501px;top:858px;width:1px;height:40px;background:#d5d5d5;"></div>
<div style="position:absolute;left:327.50px;top:862.50px;font:400 11px 'Liberation Sans',sans-serif;line-height:1;white-space:pre;color:#222;transform:scaleX(0.8642);transform-origin:0 0;">Data Set</div>
<div style="position:absolute;left:431.00px;top:862.50px;font:400 11px 'Liberation Sans',sans-serif;line-height:1;white-space:pre;color:#222;transform:scaleX(0.9149);transform-origin:0 0;">Time</div>
<div style="position:absolute;left:720.50px;top:862.50px;font:400 11px 'Liberation Sans',sans-serif;line-height:1;white-space:pre;color:#222;transform:scaleX(0.9391);transform-origin:0 0;">Notes</div>
<svg style="position:absolute;left:293px;top:880.5px;overflow:visible;" width="11" height="11" viewBox="0 0 11 11"><rect x="0.5" y="0.5" width="10" height="10" fill="#fff" stroke="#999" stroke-width="1"/><path d="M2,5.5l2.75,3.08l4.95,-6.050000000000001" fill="none" stroke="#999" stroke-width="1.2"/></svg>
<div style="position:absolute;left:313.00px;top:882.00px;font:400 11px 'Liberation Sans',sans-serif;line-height:1;white-space:pre;color:#222;transform:scaleX(0.8779);transform-origin:0 0;">Measured 1</div>
<div style="position:absolute;left:383.50px;top:882.00px;font:400 11px 'Liberation Sans',sans-serif;line-height:1;white-space:pre;color:#222;transform:scaleX(0.9709);transform-origin:0 0;">2020/10/15 13:20:30</div>
<div style="position:absolute;left:0px;top:937px;width:998px;height:18px;background:#f0f0f0;"></div>
<div style="position:absolute;left:0px;top:955px;width:998px;height:1.5px;background:#333;"></div>
<div style="position:absolute;left:290.00px;top:940.80px;font:400 11px 'Liberation Sans',sans-serif;line-height:1;white-space:pre;color:#222;">Output:</div>
<div style="position:absolute;left:333px;top:939px;width:159px;height:15px;background:#000;"></div>
<div style="position:absolute;left:335.00px;top:941.00px;font:400 11px 'Liberation Sans',sans-serif;line-height:1;white-space:pre;color:#2bdc2b;transform:scaleX(1.0179);transform-origin:0 0;">Analog Balanced 2 Ch, 40 ohm</div>
<div style="position:absolute;left:497.00px;top:940.80px;font:400 11px 'Liberation Sans',sans-serif;line-height:1;white-space:pre;color:#222;transform:scaleX(1.0081);transform-origin:0 0;">Input 1:</div>
<div style="position:absolute;left:541px;top:939px;width:170px;height:15px;background:#000;"></div>
<div style="position:absolute;left:543.00px;top:941.00px;font:400 11px 'Liberation Sans',sans-serif;line-height:1;white-space:pre;color:#2bdc2b;transform:scaleX(1.0129);transform-origin:0 0;">Analog Balanced 2 Ch, 200 kohm</div>
<div style="position:absolute;left:714px;top:939px;width:62px;height:15px;background:#000;"></div>
<div style="position:absolute;left:716.00px;top:941.00px;font:400 11px 'Liberation Sans',sans-serif;line-height:1;white-space:pre;color:#2bdc2b;transform:scaleX(1.0386);transform-origin:0 0;">5.000 Vrms</div>
<div style="position:absolute;left:779px;top:939px;width:119px;height:15px;background:#000;"></div>
<div style="position:absolute;left:781.00px;top:941.00px;font:400 11px 'Liberation Sans',sans-serif;line-height:1;white-space:pre;color:#2bdc2b;transform:scaleX(1.0086);transform-origin:0 0;">AC (&lt;10 Hz) - 22.4 kHz</div>
<div style="position:absolute;left:904.00px;top:940.80px;font:400 11px 'Liberation Sans',sans-serif;line-height:1;white-space:pre;color:#222;transform:scaleX(1.0353);transform-origin:0 0;">Input 2:</div>
<div style="position:absolute;left:948px;top:939px;width:35px;height:15px;background:#000;"></div>
<div style="position:absolute;left:950.00px;top:941.00px;font:400 11px 'Liberation Sans',sans-serif;line-height:1;white-space:pre;color:#2bdc2b;transform:scaleX(1.1788);transform-origin:0 0;">None</div>
<div style="position:absolute;left:0px;top:124px;width:2px;height:813px;background:#4b7482;"></div>
<div style="position:absolute;left:997px;top:124px;width:1.5px;height:832px;background:#4b7482;"></div>
<div style="position:absolute;left:0px;top:1144px;width:1000px;height:812px;background:#d4d4d4;"></div>
<div style="position:absolute;left:0px;top:1144px;width:1000px;height:22px;background:#4d7785;"></div>
<div style="position:absolute;left:7.50px;top:1148.90px;font:700 13.2px 'Liberation Sans',sans-serif;line-height:1;white-space:pre;color:#fff;transform:scaleX(1.0178);transform-origin:0 0;">Measurements</div>
<div style="position:absolute;left:5px;top:1166px;width:995px;height:20px;background:#f0f0f0;"></div>
<div style="position:absolute;left:6px;top:1166.5px;width:98.5px;height:18.5px;background:#80bce8;"></div>
<div style="position:absolute;left:10.30px;top:1170.40px;font:700 12.2px 'Liberation Sans',sans-serif;line-height:1;white-space:pre;color:#5f6f7c;transform:scaleX(0.9295);transform-origin:0 0;">Monitors/Meters</div>
<div style="position:absolute;left:108.00px;top:1170.40px;font:700 12.2px 'Liberation Sans',sans-serif;line-height:1;white-space:pre;color:#3d6577;transform:scaleX(0.8673);transform-origin:0 0;">Sweep</div>
<div style="position:absolute;left:151.80px;top:1170.40px;font:700 12.2px 'Liberation Sans',sans-serif;line-height:1;white-space:pre;color:#3d6577;transform:scaleX(0.8548);transform-origin:0 0;">FFT</div>
<div style="position:absolute;left:181.00px;top:1170.40px;font:700 12.2px 'Liberation Sans',sans-serif;line-height:1;white-space:pre;color:#3d6577;transform:scaleX(0.8502);transform-origin:0 0;">Recorder</div>
<div style="position:absolute;left:236.70px;top:1170.40px;font:700 12.2px 'Liberation Sans',sans-serif;line-height:1;white-space:pre;color:#3d6577;transform:scaleX(0.8825);transform-origin:0 0;">Continuous Sweep</div>
<div style="position:absolute;left:343.80px;top:1170.40px;font:700 12.2px 'Liberation Sans',sans-serif;line-height:1;white-space:pre;color:#3d6577;transform:scaleX(0.8593);transform-origin:0 0;">Acoustic Response</div>
<div style="position:absolute;left:5px;top:1186px;width:995px;height:22px;background:#d9d9d9;"></div>
<div style="position:absolute;left:5px;top:1207.5px;width:995px;height:1px;background:#bdbdbd;"></div>
<svg style="position:absolute;left:7.7px;top:1190px;overflow:visible;" width="13.3" height="13.3" viewBox="0 0 13.3 13.3"><g transform="scale(1.0230769230769232)"><rect width="13" height="13" fill="#2f4b5d"/><path d="M2,4.5h9M2,8.5h9" stroke="#fff" stroke-width="1.3"/><path d="M1.5,4.5l2.5,-2.5v5zM11.5,8.5l-2.5,-2.5v5z" fill="#fff"/></g></svg>
<svg style="position:absolute;left:26.8px;top:1190px;overflow:visible;" width="13.3" height="13.3" viewBox="0 0 13.3 13.3"><g transform="scale(1.0230769230769232)"><rect width="13" height="13" fill="#2f4b5d"/><path d="M1.5,9.5h2v-6h3v6h3v-6h2v6h1" fill="none" stroke="#fff" stroke-width="1.1"/></g></svg>
<svg style="position:absolute;left:47.3px;top:1190px;overflow:visible;" width="13.3" height="13.3" viewBox="0 0 13.3 13.3"><g transform="scale(1.0230769230769232)"><rect width="13" height="13" fill="#2f4b5d"/><circle cx="6.5" cy="6.5" r="4.3" fill="#fff"/><path d="M6.5,3.5v3l2,1.5" fill="none" stroke="#2f4b5d" stroke-width="1"/></g></svg>
<svg style="position:absolute;left:67px;top:1190px;overflow:visible;" width="13.3" height="13.3" viewBox="0 0 13.3 13.3"><g transform="scale(1.0230769230769232)"><rect width="13" height="13" fill="#2f4b5d"/><path d="M1,8c2,-5 3,-5 5,0s3,3 5,-1" fill="none" stroke="#fff" stroke-width="1.1"/><path d="M9.5,1v5M7,3.5h5" stroke="#fff" stroke-width="1.4"/></g></svg>
<div style="position:absolute;left:85px;top:1189px;width:1px;height:15px;background:#b0b0b0;"></div>
<div style="position:absolute;left:90px;top:1189.3px;width:38.7px;height:14.4px;background:#5ad35a;border:1px solid #3aa03a;box-sizing:border-box;border-radius:2px"></div>
<div style="position:absolute;left:95.00px;top:1191.25px;font:700 10.5px 'Liberation Sans',sans-serif;line-height:1;white-space:pre;color:#143c22;transform:scaleX(0.9524);transform-origin:0 0;">ON</div>
<div style="position:absolute;left:114.5px;top:1192px;width:11px;height:9px;background:#7ee07e;border:1px solid #2e5e2e;box-sizing:border-box;border-top-color:#6c6;border-left-color:#6c6"></div>
<svg style="position:absolute;left:990px;top:1190px;overflow:visible;" width="10" height="10" viewBox="0 0 10 10"><path d="M0,1h10" stroke="#4a4f7a" stroke-width="1.3"/><path d="M5,3l-3,3h2v3h2v-3h2z" fill="#4a4f7a"/></svg>
<div style="position:absolute;left:8px;top:1210px;width:492px;height:21.5px;background:#dae4e7;"></div>
<div style="position:absolute;left:8px;top:1230.5px;width:492px;height:1px;background:#c3cdd0;"></div>
<div style="position:absolute;left:8px;top:1231.5px;width:492px;height:411px;background:#ffffff;"></div>
<div style="position:absolute;left:11.30px;top:1214.00px;font:700 14px 'Liberation Sans',sans-serif;line-height:1;white-space:pre;color:#111;transform:scaleX(0.9211);transform-origin:0 0;">Scope</div>
<div style="position:absolute;left:57.60px;top:1215.00px;font:400 11px 'Liberation Sans',sans-serif;line-height:1;white-space:pre;color:#222;transform:scaleX(0.9033);transform-origin:0 0;">X:</div>
<div style="position:absolute;left:72px;top:1211.5px;width:62.8px;height:19px;background:#fff;"></div>
<div style="position:absolute;left:75.50px;top:1216.50px;font:400 11px 'Liberation Sans',sans-serif;line-height:1;white-space:pre;color:#111;">s</div>
<svg style="position:absolute;left:127px;top:1220px;overflow:visible;" width="5" height="3" viewBox="0 0 5 3"><path d="M0,0h5l-2.5,3z" fill="#222"/></svg>
<div style="position:absolute;left:135px;top:1211.5px;width:18.4px;height:19px;background:#d5dfe2;"></div>
<div style="position:absolute;left:140.00px;top:1215.00px;font:400 11px 'Liberation Sans',sans-serif;line-height:1;white-space:pre;color:#222;transform:scaleX(0.9187);transform-origin:0 0;">Y:</div>
<div style="position:absolute;left:153.4px;top:1211.5px;width:62.6px;height:19px;background:#fff;"></div>
<div style="position:absolute;left:157.00px;top:1215.50px;font:400 11px 'Liberation Sans',sans-serif;line-height:1;white-space:pre;color:#111;transform:scaleX(0.9532);transform-origin:0 0;">V</div>
<svg style="position:absolute;left:209px;top:1220px;overflow:visible;" width="5" height="3" viewBox="0 0 5 3"><path d="M0,0h5l-2.5,3z" fill="#222"/></svg>
<svg style="position:absolute;left:220px;top:1213.5px;overflow:visible;" width="14" height="14" viewBox="0 0 14 14"><g transform="scale(1.0769230769230769)"><rect width="13" height="13" fill="#2f4b5d"/><circle cx="6.5" cy="6.5" r="3.6" fill="none" stroke="#fff" stroke-width="2.2" stroke-dasharray="1.6 1.2"/><circle cx="6.5" cy="6.5" r="2.6" fill="none" stroke="#fff" stroke-width="1.4"/></g></svg>
<div style="position:absolute;left:482px;top:1213px;width:1px;height:16px;background:#c0c8cb;"></div>
<svg style="position:absolute;left:487px;top:1215.5px;overflow:visible;" width="10.5" height="10.5" viewBox="0 0 10.5 10.5"><g transform="scale(0.8076923076923077)"><path d="M2,3h4M2,3v8h8v-4" fill="none" stroke="#1f4f8a" stroke-width="1.6"/><path d="M6,7l5,-5M7.5,1.5h4v4" fill="none" stroke="#1f4f8a" stroke-width="1.6"/></g></svg>
<div style="position:absolute;left:500px;top:1210px;width:9px;height:433px;background:#d9d9d9;"></div>
<div style="position:absolute;left:503.5px;top:1210px;width:3px;height:433px;background:#9a9a9a;"></div>
<div style="position:absolute;left:509px;top:1210px;width:491px;height:21.5px;background:#dae4e7;"></div>
<div style="position:absolute;left:509px;top:1230.5px;width:491px;height:1px;background:#c3cdd0;"></div>
<div style="position:absolute;left:509px;top:1231.5px;width:491px;height:411px;background:#ffffff;"></div>
<div style="position:absolute;left:512.50px;top:1214.00px;font:700 14px 'Liberation Sans',sans-serif;line-height:1;white-space:pre;color:#111;transform:scaleX(0.7912);transform-origin:0 0;">FFT</div>
<div style="position:absolute;left:541.50px;top:1215.00px;font:400 11px 'Liberation Sans',sans-serif;line-height:1;white-space:pre;color:#222;transform:scaleX(0.9033);transform-origin:0 0;">X:</div>
<div style="position:absolute;left:555.2px;top:1211.5px;width:63.4px;height:19px;background:#fff;"></div>
<div style="position:absolute;left:559.00px;top:1215.50px;font:400 11px 'Liberation Sans',sans-serif;line-height:1;white-space:pre;color:#111;transform:scaleX(0.8920);transform-origin:0 0;">Hz</div>
<svg style="position:absolute;left:611px;top:1220px;overflow:visible;" width="5" height="3" viewBox="0 0 5 3"><path d="M0,0h5l-2.5,3z" fill="#222"/></svg>
<div style="position:absolute;left:618.6px;top:1211.5px;width:18px;height:19px;background:#d5dfe2;"></div>
<div style="position:absolute;left:623.00px;top:1215.00px;font:400 11px 'Liberation Sans',sans-serif;line-height:1;white-space:pre;color:#222;transform:scaleX(0.9187);transform-origin:0 0;">Y:</div>
<div style="position:absolute;left:636.6px;top:1211px;width:62px;height:20px;background:#fff;border:1px solid #3b8ad0;box-sizing:border-box;"></div>
<div style="position:absolute;left:688.4px;top:1212px;width:9.2px;height:18px;background:#bfe0f5;"></div>
<div style="position:absolute;left:688.4px;top:1212px;width:1px;height:18px;background:#3b8ad0;"></div>
<div style="position:absolute;left:640.50px;top:1216.00px;font:400 11px 'Liberation Sans',sans-serif;line-height:1;white-space:pre;color:#111;transform:scaleX(0.8991);transform-origin:0 0;">dBrA</div>
<svg style="position:absolute;left:690.5px;top:1220px;overflow:visible;" width="5" height="3" viewBox="0 0 5 3"><path d="M0,0h5l-2.5,3z" fill="#222"/></svg>
<svg style="position:absolute;left:703px;top:1213.5px;overflow:visible;" width="13.6" height="13.6" viewBox="0 0 13.6 13.6"><g transform="scale(1.0461538461538462)"><rect width="13" height="13" fill="#2f4b5d"/><circle cx="6.5" cy="6.5" r="3.6" fill="none" stroke="#fff" stroke-width="2.2" stroke-dasharray="1.6 1.2"/><circle cx="6.5" cy="6.5" r="2.6" fill="none" stroke="#fff" stroke-width="1.4"/></g></svg>
<div style="position:absolute;left:982px;top:1213px;width:1px;height:16px;background:#c0c8cb;"></div>
<svg style="position:absolute;left:987.4px;top:1215px;overflow:visible;" width="10.5" height="10.5" viewBox="0 0 10.5 10.5"><g transform="scale(0.8076923076923077)"><path d="M2,3h4M2,3v8h8v-4" fill="none" stroke="#1f4f8a" stroke-width="1.6"/><path d="M6,7l5,-5M7.5,1.5h4v4" fill="none" stroke="#1f4f8a" stroke-width="1.6"/></g></svg>
<svg style="position:absolute;left:0px;top:1200px;overflow:visible;" width="500" height="450" viewBox="0 0 500 450"><line x1="88.5" y1="49" x2="88.5" y2="412" stroke="#e4e4e4" stroke-width="1"/><line x1="116.5" y1="49" x2="116.5" y2="412" stroke="#d0d0d0" stroke-width="1"/><line x1="144.5" y1="49" x2="144.5" y2="412" stroke="#e4e4e4" stroke-width="1"/><line x1="172.5" y1="49" x2="172.5" y2="412" stroke="#d0d0d0" stroke-width="1"/><line x1="199.5" y1="49" x2="199.5" y2="412" stroke="#e4e4e4" stroke-width="1"/><line x1="227.5" y1="49" x2="227.5" y2="412" stroke="#d0d0d0" stroke-width="1"/><line x1="255.5" y1="49" x2="255.5" y2="412" stroke="#e4e4e4" stroke-width="1"/><line x1="283.5" y1="49" x2="283.5" y2="412" stroke="#d0d0d0" stroke-width="1"/><line x1="310.5" y1="49" x2="310.5" y2="412" stroke="#e4e4e4" stroke-width="1"/><line x1="338.5" y1="49" x2="338.5" y2="412" stroke="#d0d0d0" stroke-width="1"/><line x1="366.5" y1="49" x2="366.5" y2="412" stroke="#e4e4e4" stroke-width="1"/><line x1="394.5" y1="49" x2="394.5" y2="412" stroke="#d0d0d0" stroke-width="1"/><line x1="421.5" y1="49" x2="421.5" y2="412" stroke="#e4e4e4" stroke-width="1"/><line x1="449.5" y1="49" x2="449.5" y2="412" stroke="#d0d0d0" stroke-width="1"/><line x1="61" y1="399.5" x2="477.5" y2="399.5" stroke="#d6d6d6" stroke-width="1"/><line x1="61" y1="375.5" x2="477.5" y2="375.5" stroke="#d6d6d6" stroke-width="1"/><line x1="61" y1="351.5" x2="477.5" y2="351.5" stroke="#d6d6d6" stroke-width="1"/><line x1="61" y1="327.5" x2="477.5" y2="327.5" stroke="#d6d6d6" stroke-width="1"/><line x1="61" y1="303.5" x2="477.5" y2="303.5" stroke="#d6d6d6" stroke-width="1"/><line x1="61" y1="278.5" x2="477.5" y2="278.5" stroke="#d6d6d6" stroke-width="1"/><line x1="61" y1="254.5" x2="477.5" y2="254.5" stroke="#d6d6d6" stroke-width="1"/><line x1="61" y1="230.5" x2="477.5" y2="230.5" stroke="#d6d6d6" stroke-width="1"/><line x1="61" y1="206.5" x2="477.5" y2="206.5" stroke="#d6d6d6" stroke-width="1"/><line x1="61" y1="182.5" x2="477.5" y2="182.5" stroke="#d6d6d6" stroke-width="1"/><line x1="61" y1="157.5" x2="477.5" y2="157.5" stroke="#d6d6d6" stroke-width="1"/><line x1="61" y1="133.5" x2="477.5" y2="133.5" stroke="#d6d6d6" stroke-width="1"/><line x1="61" y1="109.5" x2="477.5" y2="109.5" stroke="#d6d6d6" stroke-width="1"/><line x1="61" y1="85.5" x2="477.5" y2="85.5" stroke="#d6d6d6" stroke-width="1"/><line x1="61" y1="61.5" x2="477.5" y2="61.5" stroke="#d6d6d6" stroke-width="1"/><polyline points="61.0,230.5 62.1,226.2 63.2,221.9 64.3,217.6 65.4,213.4 66.6,209.2 67.7,205.1 68.8,201.0 69.9,197.0 71.0,193.1 72.1,189.3 73.2,185.6 74.3,182.0 75.4,178.5 76.5,175.1 77.7,171.9 78.8,168.9 79.9,166.0 81.0,163.2 82.1,160.7 83.2,158.3 84.3,156.1 85.4,154.0 86.5,152.2 87.7,150.6 88.8,149.1 89.9,147.9 91.0,146.9 92.1,146.1 93.2,145.5 94.3,145.1 95.4,145.0 96.5,145.0 97.7,145.3 98.8,145.8 99.9,146.5 101.0,147.4 102.1,148.5 103.2,149.8 104.3,151.4 105.4,153.1 106.5,155.0 107.6,157.1 108.8,159.4 109.9,161.9 111.0,164.6 112.1,167.4 113.2,170.4 114.3,173.5 115.4,176.8 116.5,180.2 117.6,183.8 118.8,187.4 119.9,191.2 121.0,195.1 122.1,199.0 123.2,203.0 124.3,207.1 125.4,211.3 126.5,215.5 127.6,219.8 128.8,224.1 129.9,228.4 131.0,232.6 132.1,236.9 133.2,241.2 134.3,245.5 135.4,249.7 136.5,253.9 137.6,258.0 138.7,262.0 139.9,265.9 141.0,269.8 142.1,273.6 143.2,277.2 144.3,280.8 145.4,284.2 146.5,287.5 147.6,290.6 148.7,293.6 149.9,296.4 151.0,299.1 152.1,301.6 153.2,303.9 154.3,306.0 155.4,307.9 156.5,309.6 157.6,311.2 158.7,312.5 159.8,313.6 161.0,314.5 162.1,315.2 163.2,315.7 164.3,316.0 165.4,316.0 166.5,315.9 167.6,315.5 168.7,314.9 169.8,314.1 171.0,313.1 172.1,311.9 173.2,310.4 174.3,308.8 175.4,307.0 176.5,304.9 177.6,302.7 178.7,300.3 179.8,297.8 181.0,295.0 182.1,292.1 183.2,289.1 184.3,285.9 185.4,282.5 186.5,279.0 187.6,275.4 188.7,271.7 189.8,267.9 190.9,264.0 192.1,260.0 193.2,255.9 194.3,251.8 195.4,247.6 196.5,243.4 197.6,239.1 198.7,234.8 199.8,230.5 200.9,226.2 202.1,221.9 203.2,217.6 204.3,213.4 205.4,209.2 206.5,205.1 207.6,201.0 208.7,197.0 209.8,193.1 210.9,189.3 212.1,185.6 213.2,182.0 214.3,178.5 215.4,175.1 216.5,171.9 217.6,168.9 218.7,166.0 219.8,163.2 220.9,160.7 222.0,158.3 223.2,156.1 224.3,154.0 225.4,152.2 226.5,150.6 227.6,149.1 228.7,147.9 229.8,146.9 230.9,146.1 232.0,145.5 233.2,145.1 234.3,145.0 235.4,145.0 236.5,145.3 237.6,145.8 238.7,146.5 239.8,147.4 240.9,148.5 242.0,149.8 243.1,151.4 244.3,153.1 245.4,155.0 246.5,157.1 247.6,159.4 248.7,161.9 249.8,164.6 250.9,167.4 252.0,170.4 253.1,173.5 254.3,176.8 255.4,180.2 256.5,183.8 257.6,187.4 258.7,191.2 259.8,195.1 260.9,199.0 262.0,203.0 263.1,207.1 264.3,211.3 265.4,215.5 266.5,219.8 267.6,224.1 268.7,228.4 269.8,232.6 270.9,236.9 272.0,241.2 273.1,245.5 274.2,249.7 275.4,253.9 276.5,258.0 277.6,262.0 278.7,265.9 279.8,269.8 280.9,273.6 282.0,277.2 283.1,280.8 284.2,284.2 285.4,287.5 286.5,290.6 287.6,293.6 288.7,296.4 289.8,299.1 290.9,301.6 292.0,303.9 293.1,306.0 294.2,307.9 295.4,309.6 296.5,311.2 297.6,312.5 298.7,313.6 299.8,314.5 300.9,315.2 302.0,315.7 303.1,316.0 304.2,316.0 305.3,315.9 306.5,315.5 307.6,314.9 308.7,314.1 309.8,313.1 310.9,311.9 312.0,310.4 313.1,308.8 314.2,307.0 315.3,304.9 316.5,302.7 317.6,300.3 318.7,297.8 319.8,295.0 320.9,292.1 322.0,289.1 323.1,285.9 324.2,282.5 325.3,279.0 326.4,275.4 327.6,271.7 328.7,267.9 329.8,264.0 330.9,260.0 332.0,255.9 333.1,251.8 334.2,247.6 335.3,243.4 336.4,239.1 337.6,234.8 338.7,230.5 339.8,226.2 340.9,221.9 342.0,217.6 343.1,213.4 344.2,209.2 345.3,205.1 346.4,201.0 347.6,197.0 348.7,193.1 349.8,189.3 350.9,185.6 352.0,182.0 353.1,178.5 354.2,175.1 355.3,171.9 356.4,168.9 357.5,166.0 358.7,163.2 359.8,160.7 360.9,158.3 362.0,156.1 363.1,154.0 364.2,152.2 365.3,150.6 366.4,149.1 367.5,147.9 368.7,146.9 369.8,146.1 370.9,145.5 372.0,145.1 373.1,145.0 374.2,145.0 375.3,145.3 376.4,145.8 377.5,146.5 378.7,147.4 379.8,148.5 380.9,149.8 382.0,151.4 383.1,153.1 384.2,155.0 385.3,157.1 386.4,159.4 387.5,161.9 388.6,164.6 389.8,167.4 390.9,170.4 392.0,173.5 393.1,176.8 394.2,180.2 395.3,183.8 396.4,187.4 397.5,191.2 398.6,195.1 399.8,199.0 400.9,203.0 402.0,207.1 403.1,211.3 404.2,215.5 405.3,219.8 406.4,224.1 407.5,228.4 408.6,232.6 409.7,236.9 410.9,241.2 412.0,245.5 413.1,249.7 414.2,253.9 415.3,258.0 416.4,262.0 417.5,265.9 418.6,269.8 419.7,273.6 420.9,277.2 422.0,280.8 423.1,284.2 424.2,287.5 425.3,290.6 426.4,293.6 427.5,296.4 428.6,299.1 429.7,301.6 430.9,303.9 432.0,306.0 433.1,307.9 434.2,309.6 435.3,311.2 436.4,312.5 437.5,313.6 438.6,314.5 439.7,315.2 440.8,315.7 442.0,316.0 443.1,316.0 444.2,315.9 445.3,315.5 446.4,314.9 447.5,314.1 448.6,313.1 449.7,311.9 450.8,310.4 452.0,308.8 453.1,307.0 454.2,304.9 455.3,302.7 456.4,300.3 457.5,297.8 458.6,295.0 459.7,292.1 460.8,289.1 462.0,285.9 463.1,282.5 464.2,279.0 465.3,275.4 466.4,271.7 467.5,267.9 468.6,264.0 469.7,260.0 470.8,255.9 471.9,251.8 473.1,247.6 474.2,243.4 475.3,239.1 476.4,234.8 477.5,230.5" fill="none" stroke="#a14b5c" stroke-width="1.25"/><rect x="61.5" y="49.5" width="415.5" height="362" fill="none" stroke="#8c8c8c" stroke-width="1.5"/></svg>
<div style="position:absolute;left:255.00px;top:1237.70px;font:400 10px 'Liberation Mono',sans-serif;line-height:1;white-space:pre;color:#111;transform:scaleX(0.8995);transform-origin:0 0;-webkit-text-stroke:0.35px #111;">Scope</div>
<div style="position:absolute;left:34.30px;top:1255.85px;font:400 10.5px 'Liberation Sans',sans-serif;line-height:1;white-space:pre;color:#222;transform:scaleX(0.8757);transform-origin:0 0;">140m</div>
<div style="position:absolute;left:34.30px;top:1280.05px;font:400 10.5px 'Liberation Sans',sans-serif;line-height:1;white-space:pre;color:#222;transform:scaleX(0.8757);transform-origin:0 0;">120m</div>
<div style="position:absolute;left:34.30px;top:1304.25px;font:400 10.5px 'Liberation Sans',sans-serif;line-height:1;white-space:pre;color:#222;transform:scaleX(0.8757);transform-origin:0 0;">100m</div>
<div style="position:absolute;left:40.05px;top:1328.45px;font:400 10.5px 'Liberation Sans',sans-serif;line-height:1;white-space:pre;color:#222;transform:scaleX(0.8440);transform-origin:0 0;">80m</div>
<div style="position:absolute;left:40.05px;top:1352.65px;font:400 10.5px 'Liberation Sans',sans-serif;line-height:1;white-space:pre;color:#222;transform:scaleX(0.8440);transform-origin:0 0;">60m</div>
<div style="position:absolute;left:40.05px;top:1376.85px;font:400 10.5px 'Liberation Sans',sans-serif;line-height:1;white-space:pre;color:#222;transform:scaleX(0.8440);transform-origin:0 0;">40m</div>
<div style="position:absolute;left:40.05px;top:1401.05px;font:400 10.5px 'Liberation Sans',sans-serif;line-height:1;white-space:pre;color:#222;transform:scaleX(0.8440);transform-origin:0 0;">20m</div>
<div style="position:absolute;left:51.55px;top:1425.25px;font:400 10.5px 'Liberation Sans',sans-serif;line-height:1;white-space:pre;color:#222;transform:scaleX(0.9840);transform-origin:0 0;">0</div>
<div style="position:absolute;left:34.30px;top:1449.45px;font:400 10.5px 'Liberation Sans',sans-serif;line-height:1;white-space:pre;color:#222;transform:scaleX(0.9608);transform-origin:0 0;">-20m</div>
<div style="position:absolute;left:34.30px;top:1473.65px;font:400 10.5px 'Liberation Sans',sans-serif;line-height:1;white-space:pre;color:#222;transform:scaleX(0.9608);transform-origin:0 0;">-40m</div>
<div style="position:absolute;left:34.30px;top:1497.85px;font:400 10.5px 'Liberation Sans',sans-serif;line-height:1;white-space:pre;color:#222;transform:scaleX(0.9608);transform-origin:0 0;">-60m</div>
<div style="position:absolute;left:34.30px;top:1522.05px;font:400 10.5px 'Liberation Sans',sans-serif;line-height:1;white-space:pre;color:#222;transform:scaleX(0.9608);transform-origin:0 0;">-80m</div>
<div style="position:absolute;left:28.55px;top:1546.25px;font:400 10.5px 'Liberation Sans',sans-serif;line-height:1;white-space:pre;color:#222;transform:scaleX(0.9659);transform-origin:0 0;">-100m</div>
<div style="position:absolute;left:28.55px;top:1570.45px;font:400 10.5px 'Liberation Sans',sans-serif;line-height:1;white-space:pre;color:#222;transform:scaleX(0.9659);transform-origin:0 0;">-120m</div>
<div style="position:absolute;left:28.55px;top:1594.65px;font:400 10.5px 'Liberation Sans',sans-serif;line-height:1;white-space:pre;color:#222;transform:scaleX(0.9659);transform-origin:0 0;">-140m</div>
<div style="position:absolute;left:58.20px;top:1615.45px;font:400 10.5px 'Liberation Sans',sans-serif;line-height:1;white-space:pre;color:#222;transform:scaleX(0.9583);transform-origin:0 0;">0</div>
<div style="position:absolute;left:105.33px;top:1615.45px;font:400 10.5px 'Liberation Sans',sans-serif;line-height:1;white-space:pre;color:#222;transform:scaleX(0.9589);transform-origin:0 0;">400u</div>
<div style="position:absolute;left:160.87px;top:1615.45px;font:400 10.5px 'Liberation Sans',sans-serif;line-height:1;white-space:pre;color:#222;transform:scaleX(0.9589);transform-origin:0 0;">800u</div>
<div style="position:absolute;left:216.40px;top:1615.45px;font:400 10.5px 'Liberation Sans',sans-serif;line-height:1;white-space:pre;color:#222;transform:scaleX(0.9596);transform-origin:0 0;">1.2m</div>
<div style="position:absolute;left:271.93px;top:1615.45px;font:400 10.5px 'Liberation Sans',sans-serif;line-height:1;white-space:pre;color:#222;transform:scaleX(0.9596);transform-origin:0 0;">1.6m</div>
<div style="position:absolute;left:327.47px;top:1615.45px;font:400 10.5px 'Liberation Sans',sans-serif;line-height:1;white-space:pre;color:#222;transform:scaleX(0.9596);transform-origin:0 0;">2.0m</div>
<div style="position:absolute;left:383.00px;top:1615.45px;font:400 10.5px 'Liberation Sans',sans-serif;line-height:1;white-space:pre;color:#222;transform:scaleX(0.9596);transform-origin:0 0;">2.4m</div>
<div style="position:absolute;left:438.53px;top:1615.45px;font:400 10.5px 'Liberation Sans',sans-serif;line-height:1;white-space:pre;color:#222;transform:scaleX(0.9596);transform-origin:0 0;">2.8m</div>
<div style="position:absolute;left:251.50px;top:1627.05px;font:400 10.5px 'Liberation Sans',sans-serif;line-height:1;white-space:pre;color:#222;transform:scaleX(0.9184);transform-origin:0 0;">Time (s)</div>
<div style="position:absolute;left:-80px;top:1424.5px;width:200px;height:10px;text-align:center;font:400 10px 'Liberation Sans';line-height:10px;color:#222;white-space:pre;transform:rotate(-90deg) scaleX(0.98);transform-origin:100px 5px;">Instantaneous Level (V)</div>
<svg style="position:absolute;left:500px;top:1200px;overflow:visible;" width="500" height="450" viewBox="0 0 500 450"><line x1="77.5" y1="49" x2="77.5" y2="412" stroke="#d0d0d0" stroke-width="1"/><line x1="95.5" y1="49" x2="95.5" y2="412" stroke="#ebebeb" stroke-width="1"/><line x1="109.5" y1="49" x2="109.5" y2="412" stroke="#d0d0d0" stroke-width="1"/><line x1="120.5" y1="49" x2="120.5" y2="412" stroke="#ebebeb" stroke-width="1"/><line x1="129.5" y1="49" x2="129.5" y2="412" stroke="#ebebeb" stroke-width="1"/><line x1="137.5" y1="49" x2="137.5" y2="412" stroke="#ebebeb" stroke-width="1"/><line x1="145.5" y1="49" x2="145.5" y2="412" stroke="#ebebeb" stroke-width="1"/><line x1="151.5" y1="49" x2="151.5" y2="412" stroke="#d0d0d0" stroke-width="1"/><line x1="194.5" y1="49" x2="194.5" y2="412" stroke="#d0d0d0" stroke-width="1"/><line x1="219.5" y1="49" x2="219.5" y2="412" stroke="#d0d0d0" stroke-width="1"/><line x1="237.5" y1="49" x2="237.5" y2="412" stroke="#ebebeb" stroke-width="1"/><line x1="250.5" y1="49" x2="250.5" y2="412" stroke="#d0d0d0" stroke-width="1"/><line x1="262.5" y1="49" x2="262.5" y2="412" stroke="#ebebeb" stroke-width="1"/><line x1="271.5" y1="49" x2="271.5" y2="412" stroke="#ebebeb" stroke-width="1"/><line x1="279.5" y1="49" x2="279.5" y2="412" stroke="#ebebeb" stroke-width="1"/><line x1="287.5" y1="49" x2="287.5" y2="412" stroke="#ebebeb" stroke-width="1"/><line x1="293.5" y1="49" x2="293.5" y2="412" stroke="#d0d0d0" stroke-width="1"/><line x1="336.5" y1="49" x2="336.5" y2="412" stroke="#d0d0d0" stroke-width="1"/><line x1="361.5" y1="49" x2="361.5" y2="412" stroke="#d0d0d0" stroke-width="1"/><line x1="378.5" y1="49" x2="378.5" y2="412" stroke="#ebebeb" stroke-width="1"/><line x1="392.5" y1="49" x2="392.5" y2="412" stroke="#d0d0d0" stroke-width="1"/><line x1="403.5" y1="49" x2="403.5" y2="412" stroke="#ebebeb" stroke-width="1"/><line x1="413.5" y1="49" x2="413.5" y2="412" stroke="#ebebeb" stroke-width="1"/><line x1="421.5" y1="49" x2="421.5" y2="412" stroke="#ebebeb" stroke-width="1"/><line x1="428.5" y1="49" x2="428.5" y2="412" stroke="#ebebeb" stroke-width="1"/><line x1="435.5" y1="49" x2="435.5" y2="412" stroke="#d0d0d0" stroke-width="1"/><line x1="52.60000000000002" y1="60.5" x2="478" y2="60.5" stroke="#d6d6d6" stroke-width="1"/><line x1="52.60000000000002" y1="80.5" x2="478" y2="80.5" stroke="#d6d6d6" stroke-width="1"/><line x1="52.60000000000002" y1="99.5" x2="478" y2="99.5" stroke="#d6d6d6" stroke-width="1"/><line x1="52.60000000000002" y1="119.5" x2="478" y2="119.5" stroke="#d6d6d6" stroke-width="1"/><line x1="52.60000000000002" y1="138.5" x2="478" y2="138.5" stroke="#d6d6d6" stroke-width="1"/><line x1="52.60000000000002" y1="158.5" x2="478" y2="158.5" stroke="#d6d6d6" stroke-width="1"/><line x1="52.60000000000002" y1="177.5" x2="478" y2="177.5" stroke="#d6d6d6" stroke-width="1"/><line x1="52.60000000000002" y1="197.5" x2="478" y2="197.5" stroke="#d6d6d6" stroke-width="1"/><line x1="52.60000000000002" y1="216.5" x2="478" y2="216.5" stroke="#d6d6d6" stroke-width="1"/><line x1="52.60000000000002" y1="236.5" x2="478" y2="236.5" stroke="#d6d6d6" stroke-width="1"/><line x1="52.60000000000002" y1="255.5" x2="478" y2="255.5" stroke="#d6d6d6" stroke-width="1"/><line x1="52.60000000000002" y1="275.5" x2="478" y2="275.5" stroke="#d6d6d6" stroke-width="1"/><line x1="52.60000000000002" y1="294.5" x2="478" y2="294.5" stroke="#d6d6d6" stroke-width="1"/><line x1="52.60000000000002" y1="314.5" x2="478" y2="314.5" stroke="#d6d6d6" stroke-width="1"/><line x1="52.60000000000002" y1="333.5" x2="478" y2="333.5" stroke="#d6d6d6" stroke-width="1"/><line x1="52.60000000000002" y1="353.5" x2="478" y2="353.5" stroke="#d6d6d6" stroke-width="1"/><line x1="52.60000000000002" y1="372.5" x2="478" y2="372.5" stroke="#d6d6d6" stroke-width="1"/><line x1="52.60000000000002" y1="392.5" x2="478" y2="392.5" stroke="#d6d6d6" stroke-width="1"/><line x1="52.60000000000002" y1="412.5" x2="478" y2="412.5" stroke="#d6d6d6" stroke-width="1"/><polyline points="53.4,367.4 54.3,389.2 55.2,368.2 56.1,376.2 57.0,369.9 57.9,374.6 58.8,362.5 59.7,385.2 60.6,390.2 61.5,370.2 62.4,375.7 63.3,382.3 64.2,376.3 65.1,361.7 66.0,380.7 66.9,368.4 67.8,381.8 68.7,367.5 69.6,390.5 70.5,372.7 71.4,378.5 72.3,365.2 73.2,371.7 74.1,387.9 75.0,374.4 75.9,373.0 76.8,373.7 77.7,390.2 78.6,362.3 79.5,386.7 80.4,362.5 81.3,389.9 82.2,362.9 83.1,374.8 84.0,387.0 84.9,368.9 85.8,376.3 86.7,363.1 87.6,375.0 88.5,364.2 89.4,390.0 90.3,365.4 91.2,376.7 92.1,372.9 93.0,374.7 93.9,364.2 94.8,386.6 95.7,365.3 96.6,362.5 97.5,377.3 98.4,366.3 99.3,389.8 100.2,369.1 101.1,376.2 102.0,373.7 102.9,377.4 103.8,371.4 104.7,376.4 105.6,373.3 106.5,380.4 107.4,373.7 108.3,364.5 109.2,388.3 109.9,377.6 110.6,386.5 111.3,368.3 112.0,394.8 112.7,377.9 113.4,402.5 114.1,367.4 114.8,392.3 115.5,386.5 116.2,377.2 116.9,373.5 117.6,403.8 118.3,379.3 119.0,385.8 119.7,383.1 120.4,379.4 121.1,383.2 121.8,375.6 122.5,389.6 123.2,368.4 123.9,398.6 124.6,380.1 125.3,399.8 126.0,373.3 126.7,402.1 127.4,374.5 128.1,401.3 128.8,378.1 129.5,395.3 130.2,368.5 130.9,404.1 131.6,379.9 132.3,398.5 133.0,374.9 133.7,384.5 134.4,367.6 135.1,393.1 135.8,379.4 136.5,395.9 137.2,371.6 137.9,372.4 138.6,387.1 139.3,383.0 140.0,392.2 140.7,372.9 141.4,387.0 142.1,381.3 142.8,401.7 143.5,377.4 144.2,385.7 144.9,381.8 145.6,398.0 146.3,372.0 147.0,392.4 147.7,370.9 148.4,396.2 149.1,372.7 149.8,403.8 150.5,368.4 151.2,382.5 151.9,379.6 152.6,389.4 153.3,367.5 154.0,375.1 154.7,381.7 155.4,385.8 156.1,396.3 156.8,378.2 157.5,400.1 158.2,379.2 158.9,393.0 159.6,367.3 160.3,398.1 161.0,371.9 161.7,397.7 162.4,377.9 163.1,391.2 163.8,383.0 164.5,383.5 165.2,385.5 165.9,378.1 166.6,390.8 167.3,382.6 168.0,403.0 168.7,378.6 169.4,398.3 170.1,378.4 170.8,387.3 171.5,384.4 172.2,394.3 172.9,372.8 173.6,401.1 174.3,368.6 175.0,394.6 175.7,375.7 176.4,381.3 177.1,381.2 177.8,389.9 178.5,369.6 179.2,376.2 179.9,400.8 180.6,383.7 181.3,403.1 182.0,387.5 182.7,372.2 183.4,396.5 184.1,381.9 184.8,389.4 185.5,382.0 186.2,387.2 186.9,384.1 187.6,395.1 188.3,376.5 189.0,395.7 189.7,403.6 190.4,374.2 191.1,394.8 191.8,379.3 192.5,376.6 193.2,403.3 193.9,371.9 194.6,385.5 195.3,381.5 196.0,393.0 196.7,370.5 197.4,402.6 198.1,399.5 198.8,386.9 199.5,379.2 200.2,390.4 200.9,369.0 201.6,385.4 202.3,371.5 203.0,394.1 203.7,373.7 204.4,394.1 205.1,370.7 205.8,396.5 206.5,382.1 207.2,401.2 207.9,380.1 208.6,402.1 209.3,372.7 210.0,387.4 210.7,382.7 211.4,371.3 212.1,388.3 212.8,400.6 213.5,381.0 214.2,374.2 214.9,383.1 215.6,379.1 216.3,403.5 217.0,393.6 217.7,376.0 218.4,386.8 219.1,385.0 219.8,403.3 220.3,381.6 220.8,377.1 221.3,408.9 221.8,385.8 222.3,375.7 222.8,401.5 223.3,378.8 223.8,402.6 224.3,382.0 224.8,383.1 225.3,396.1 225.8,383.6 226.3,396.3 226.8,380.9 227.3,385.4 227.8,406.3 228.3,382.3 228.8,404.2 229.3,386.4 229.8,397.6 230.3,383.7 230.8,408.4 231.3,385.4 231.8,406.1 232.3,383.9 232.8,406.6 233.3,399.2 233.8,375.1 234.3,405.0 234.8,377.7 235.3,405.5 235.8,382.7 236.3,402.9 236.8,386.6 237.3,406.2 237.8,386.4 238.3,382.1 238.8,397.5 239.3,375.5 239.8,399.8 240.3,397.4 240.8,381.4 241.3,411.0 241.8,386.6 242.3,408.3 242.8,404.2 243.3,375.5 243.8,395.6 244.3,376.9 244.8,404.4 245.3,411.0 245.8,381.1 246.3,399.6 246.8,382.6 247.3,398.0 247.8,378.4 248.3,377.8 248.8,376.8 249.3,400.1 249.8,383.7 250.3,386.5 250.8,393.9 251.3,380.0 251.8,411.0 252.3,381.1 252.8,406.6 253.3,386.4 253.8,404.3 254.3,404.7 254.8,377.3 255.3,381.1 255.8,380.1 256.3,401.4 256.8,381.8 257.3,407.7 257.8,386.6 258.3,406.9 258.8,376.3 259.3,407.8 259.8,379.1 260.3,405.9 260.8,381.9 261.3,407.2 261.8,377.9 262.3,410.4 262.8,375.4 263.3,378.1 263.8,404.7 264.3,403.1 264.8,394.2 265.3,381.4 265.8,399.8 266.3,377.4 266.8,407.1 267.3,375.8 267.8,384.4 268.3,407.5 268.8,379.9 269.3,408.3 269.8,382.6 270.3,398.9 270.8,383.7 271.3,400.9 271.8,376.1 272.3,394.0 272.8,403.5 273.3,383.0 273.8,407.7 274.3,396.7 274.8,375.9 275.3,406.7 275.8,378.2 276.3,379.1 276.8,399.7 277.3,406.4 277.8,385.7 278.3,410.3 278.8,384.3 279.3,398.7 279.8,385.9 280.3,397.4 280.8,379.2 281.3,400.2 281.8,377.2 282.3,408.1 282.8,384.7 283.3,396.0 283.8,385.3 284.3,392.9 284.8,381.3 285.3,411.0 285.8,384.4 286.3,381.3 286.8,394.2 287.3,406.9 287.8,375.9 288.3,395.3 288.8,382.5 289.3,396.8 289.8,381.0 290.3,400.2 290.8,386.3 291.3,402.2 291.8,383.4 292.3,410.4 292.8,384.6 293.3,409.2 293.8,383.4 294.3,411.0 294.8,381.0 295.3,411.0 295.8,380.2 296.3,382.7 296.8,406.2 297.3,378.5 297.8,404.9 298.3,377.3 298.8,402.1 299.3,382.9 299.8,401.3 300.3,381.4 300.8,400.9 301.3,403.2 301.8,378.7 302.3,409.6 302.8,378.3 303.3,403.0 303.8,379.3 304.3,411.0 304.8,378.9 305.3,411.0 305.8,381.2 306.3,407.9 306.8,377.3 307.3,411.0 307.8,381.0 308.3,404.6 308.8,382.0 309.3,400.5 309.8,379.8 310.3,411.0 310.8,378.1 311.3,405.3 311.8,383.7 312.3,410.3 312.8,379.0 313.3,402.7 313.8,376.9 314.3,411.0 314.8,377.5 315.3,411.0 315.8,407.8 316.3,384.4 316.8,411.0 317.3,383.1 317.8,411.0 318.3,411.0 318.8,381.1 319.3,402.8 319.8,379.3 320.3,401.5 320.8,380.5 321.3,405.9 321.8,377.7 322.3,407.5 322.8,383.4 323.3,400.5 323.8,382.4 324.3,409.1 324.8,377.0 325.3,411.0 325.8,381.7 326.3,406.2 326.8,379.2 327.3,406.4 327.8,378.9 328.3,411.0 328.8,384.3 329.3,411.0 329.8,383.3 330.3,378.0 330.8,382.2 331.3,403.1 331.8,383.4 332.3,401.7 332.8,378.1 333.3,380.1 333.8,384.1 334.3,408.3 334.8,382.9 335.3,406.4 335.8,380.1 336.3,380.0 336.8,411.0 337.3,382.0 337.8,400.6 338.3,379.6 338.8,402.0 339.3,380.9 339.8,411.0 340.3,378.1 340.8,411.0 341.3,379.6 341.8,402.5 342.3,384.6 342.8,411.0 343.3,378.4 343.8,410.1 344.3,377.5 344.8,409.3 345.3,379.5 345.8,406.0 346.3,377.9 346.8,402.4 347.3,381.1 347.8,409.1 348.3,384.0 348.8,411.0 349.3,377.8 349.8,404.8 350.3,378.8 350.8,411.0 351.3,381.2 351.8,377.1 352.3,411.0 352.8,382.0 353.3,410.8 353.8,379.9 354.3,411.0 354.8,403.4 355.3,378.0 355.8,409.2 356.3,380.9 356.8,409.2 357.3,381.9 357.8,382.1 358.3,384.4 358.8,407.7 359.3,381.8 359.8,411.0 360.3,380.7 360.8,411.0 361.3,380.1 361.8,409.2 362.3,381.0 362.8,407.1 363.3,379.4 363.8,382.6 364.3,411.0 364.8,382.8 365.3,409.6 365.8,402.3 366.3,380.8 366.8,401.1 367.3,381.0 367.8,405.1 368.3,378.7 368.8,384.0 369.3,410.7 369.8,380.2 370.3,403.8 370.8,381.3 371.3,401.9 371.8,377.9 372.3,411.0 372.8,404.1 373.3,379.4 373.8,383.9 374.3,406.5 374.8,381.5 375.3,377.1 375.8,405.1 376.3,384.2 376.8,407.7 377.3,379.2 377.8,411.0 378.3,383.4 378.8,407.7 379.3,383.8 379.8,403.5 380.3,378.4 380.8,401.1 381.3,411.0 381.8,383.9 382.3,411.0 382.8,411.0 383.3,380.4 383.8,378.6 384.3,411.0 384.8,378.3 385.3,410.7 385.8,379.8 386.3,411.0 386.8,378.7 387.3,411.0 387.8,379.0 388.3,401.7 388.8,380.3 389.3,408.6 389.8,409.7 390.3,378.8 390.8,401.7 391.3,382.8 391.8,404.7 392.3,378.3 392.8,411.0 393.3,407.5 393.8,379.9 394.3,408.1 394.8,381.2 395.3,405.9 395.8,383.0 396.3,408.2 396.8,382.2 397.3,411.0 397.8,383.0 398.3,409.8 398.8,380.3 399.3,411.0 399.8,378.7 400.3,403.8 400.8,380.8 401.3,381.5 401.8,409.3 402.3,378.3 402.8,400.6 403.3,380.3 403.8,404.4 404.3,377.5 404.8,409.2 405.3,383.1 405.8,402.6 406.3,377.2 406.8,410.0 407.3,379.0 407.8,401.7 408.3,378.2 408.8,402.8 409.3,383.4 409.8,401.3 410.3,379.7 410.8,411.0 411.3,408.0 411.8,384.6 412.3,380.4 412.8,400.9 413.3,383.8 413.8,380.0 414.3,407.0 414.8,400.9 415.3,382.8 415.8,403.9 416.3,381.2 416.8,407.5 417.3,379.7 417.8,411.0 418.3,377.2 418.8,410.5 419.3,405.7 419.8,383.6 420.3,411.0 420.8,380.0 421.3,406.3 421.8,378.6 422.3,403.2 422.8,378.2 423.3,403.7 423.8,379.3 424.3,411.0 424.8,383.6 425.3,406.3 425.8,411.0 426.3,379.0 426.8,378.3 427.3,406.5 427.8,382.5 428.3,406.0 428.8,384.2 429.3,411.0 429.8,384.0 430.3,379.4 430.8,401.6 431.3,379.4 431.8,408.4 432.3,406.5 432.8,377.2 433.3,409.6 433.8,405.2 434.3,381.1 434.8,382.4 435.3,411.0 435.8,378.0 436.3,404.7 436.8,380.1 437.3,411.0 437.8,379.2 438.3,403.7 438.8,400.7 439.3,381.3 439.8,411.0 440.3,382.1 440.8,403.7 441.3,382.1 441.8,411.0 442.3,381.8 442.8,380.2 443.3,401.3 443.8,379.4 444.3,404.7 444.8,380.0 445.3,402.9 445.8,378.8 446.3,379.6 446.8,402.7 447.3,382.4 447.8,411.0 448.3,406.4 448.8,377.4 449.3,401.2 449.8,381.5 450.3,405.4 450.8,377.1 451.3,411.0 451.8,378.9 452.3,403.2 452.8,381.7 453.3,406.0 453.8,384.2 454.3,410.1 454.8,380.1 455.3,404.6 455.8,383.8 456.3,411.0 456.8,402.4 457.3,379.3 457.8,411.0 458.3,403.3 458.8,382.2 459.3,400.3 459.8,380.0 460.3,408.0 460.8,381.2 461.3,409.1 461.8,384.5 462.3,405.7 462.8,379.3 463.3,411.0 463.8,384.4 464.3,402.8 464.8,380.7 465.3,406.1 465.8,382.7 466.3,404.0 466.8,379.4 467.3,408.3 467.8,401.3 468.3,401.9 468.8,377.8 469.3,411.0 469.8,378.2 470.3,411.0 470.8,404.3 471.3,383.1 471.8,411.0 472.3,382.5 472.8,405.5 473.3,383.5 473.8,409.2 474.3,382.4 474.8,411.0 475.3,377.9 475.8,410.8 476.3,378.3 476.8,381.5" fill="none" stroke="#50649e" stroke-width="0.8" stroke-opacity="0.9"/><polyline points="53.4,380.4 54.3,377.1 55.2,393.1 56.1,380.0 57.0,381.7 57.9,370.5 58.8,372.4 59.7,400.2 60.6,387.2 61.5,391.4 62.4,373.4 63.3,396.4 64.2,372.4 65.1,392.9 66.0,380.6 66.9,394.3 67.8,378.5 68.7,371.1 69.6,380.0 70.5,390.3 71.4,387.1 72.3,391.8 73.2,393.0 74.1,371.7 75.0,387.9 75.9,369.7 76.8,379.5 77.7,382.3 78.6,374.7 79.5,384.7 80.4,374.7 81.3,396.6 82.2,369.7 83.1,393.6 84.0,372.3 84.9,397.7 85.8,374.3 86.7,395.0 87.6,369.4 88.5,383.1 89.4,387.8 90.3,372.7 91.2,381.0 92.1,380.3 93.0,375.3 93.9,396.3 94.8,373.8 95.7,397.0 96.6,380.6 97.5,380.2 98.4,394.6 99.3,379.7 100.2,375.8 101.1,388.4 102.0,376.8 102.9,387.9 103.8,373.2 104.7,398.5 105.6,370.2 106.5,395.3 107.4,377.8 108.3,394.1 109.2,369.0 109.9,373.3 110.6,382.9 111.3,374.2 112.0,394.3 112.7,370.7 113.4,389.6 114.1,369.0 114.8,392.0 115.5,371.0 116.2,397.9 116.9,371.9 117.6,403.1 118.3,370.3 119.0,404.0 119.7,396.4 120.4,378.4 121.1,396.0 121.8,382.2 122.5,393.6 123.2,369.1 123.9,397.6 124.6,378.8 125.3,391.0 126.0,377.7 126.7,393.8 127.4,396.2 128.1,377.6 128.8,402.8 129.5,375.4 130.2,398.6 130.9,380.1 131.6,391.4 132.3,369.3 133.0,393.3 133.7,381.9 134.4,402.9 135.1,381.1 135.8,404.1 136.5,401.4 137.2,371.5 137.9,392.5 138.6,382.3 139.3,388.8 140.0,368.4 140.7,399.7 141.4,371.4 142.1,401.1 142.8,376.8 143.5,399.9 144.2,373.6 144.9,367.8 145.6,401.3 146.3,369.2 147.0,391.1 147.7,378.0 148.4,384.3 149.1,370.8 149.8,401.6 150.5,370.6 151.2,392.0 151.9,390.0 152.6,378.2 153.3,395.7 154.0,370.3 154.7,379.3 155.4,385.5 156.1,403.0 156.8,373.4 157.5,404.1 158.2,380.1 158.9,389.4 159.6,369.7 160.3,391.9 161.0,374.3 161.7,393.6 162.4,373.2 163.1,387.8 163.8,372.1 164.5,388.9 165.2,379.0 165.9,402.8 166.6,380.2 167.3,392.4 168.0,391.7 168.7,374.9 169.4,389.0 170.1,378.9 170.8,391.6 171.5,402.0 172.2,374.5 172.9,400.4 173.6,377.5 174.3,384.9 175.0,368.7 175.7,390.8 176.4,378.9 177.1,402.0 177.8,367.5 178.5,392.8 179.2,375.3 179.9,397.2 180.6,384.2 181.3,404.1 182.0,381.7 182.7,397.8 183.4,368.3 184.1,391.4 184.8,371.0 185.5,387.2 186.2,369.6 186.9,398.7 187.6,386.3 188.3,378.1 189.0,388.2 189.7,380.0 190.4,385.3 191.1,367.4 191.8,403.0 192.5,367.5 193.2,394.3 193.9,369.1 194.6,389.2 195.3,369.3 196.0,385.5 196.7,393.7 197.4,380.8 198.1,391.6 198.8,387.4 199.5,376.9 200.2,401.0 200.9,401.0 201.6,384.2 202.3,391.5 203.0,382.3 203.7,391.6 204.4,386.0 205.1,380.0 205.8,386.1 206.5,367.6 207.2,372.4 207.9,396.6 208.6,367.9 209.3,384.4 210.0,369.1 210.7,389.8 211.4,378.6 212.1,403.1 212.8,375.9 213.5,391.2 214.2,380.1 214.9,390.6 215.6,375.5 216.3,392.0 217.0,368.0 217.7,384.1 218.4,376.7 219.1,387.5 219.8,399.8 220.3,380.6 220.8,407.1 221.3,375.0 221.8,411.0 222.3,404.1 222.8,379.2 223.3,399.7 223.8,382.1 224.3,398.7 224.8,381.0 225.3,393.5 225.8,397.4 226.3,384.3 226.8,409.3 227.3,378.3 227.8,394.2 228.3,384.7 228.8,398.7 229.3,384.2 229.8,393.6 230.3,375.5 230.8,403.3 231.3,382.4 231.8,385.9 232.3,403.8 232.8,406.9 233.3,382.9 233.8,410.4 234.3,407.8 234.8,383.7 235.3,401.3 235.8,376.3 236.3,406.9 236.8,394.8 237.3,382.7 237.8,394.7 238.3,398.6 238.8,381.5 239.3,396.6 239.8,381.2 240.3,394.9 240.8,380.5 241.3,380.0 241.8,405.7 242.3,380.7 242.8,400.1 243.3,376.2 243.8,395.8 244.3,377.3 244.8,395.7 245.3,381.9 245.8,400.1 246.3,384.8 246.8,403.9 247.3,386.4 247.8,406.1 248.3,378.0 248.8,403.7 249.3,375.7 249.8,399.9 250.3,380.0 250.8,403.4 251.3,385.6 251.8,402.0 252.3,383.8 252.8,378.5 253.3,393.2 253.8,381.6 254.3,399.0 254.8,386.1 255.3,408.2 255.8,407.8 256.3,377.3 256.8,404.4 257.3,407.4 257.8,385.5 258.3,406.0 258.8,386.1 259.3,398.2 259.8,383.5 260.3,397.4 260.8,403.0 261.3,378.4 261.8,395.1 262.3,378.1 262.8,397.9 263.3,385.2 263.8,409.3 264.3,382.1 264.8,406.8 265.3,382.7 265.8,407.6 266.3,375.6 266.8,399.6 267.3,377.7 267.8,399.7 268.3,386.0 268.8,403.6 269.3,377.7 269.8,394.7 270.3,382.6 270.8,385.5 271.3,381.6 271.8,386.5 272.3,409.5 272.8,405.5 273.3,393.1 273.8,386.4 274.3,409.2 274.8,381.0 275.3,381.1 275.8,402.8 276.3,380.8 276.8,406.3 277.3,380.6 277.8,380.6 278.3,411.0 278.8,376.5 279.3,399.1 279.8,385.9 280.3,411.0 280.8,385.0 281.3,392.9 281.8,381.9 282.3,404.5 282.8,385.9 283.3,381.0 283.8,393.1 284.3,409.5 284.8,375.2 285.3,384.7 285.8,402.7 286.3,383.8 286.8,392.5 287.3,408.0 287.8,384.7 288.3,399.1 288.8,375.1 289.3,397.6 289.8,381.1 290.3,405.7 290.8,377.7 291.3,395.9 291.8,397.5 292.3,384.1 292.8,397.2 293.3,378.0 293.8,404.3 294.1,378.3 294.5,405.0 294.8,382.6 295.1,411.0 295.5,377.5 295.8,404.1 296.1,380.1 296.4,406.1 296.8,384.0 297.1,406.4 297.4,411.0 297.8,379.5 298.1,406.3 298.4,381.5 298.8,407.8 299.1,377.0 299.4,406.3 299.7,411.0 300.1,403.5 300.4,384.4 300.7,405.7 301.1,378.0 301.4,411.0 301.7,377.9 302.1,411.0 302.4,384.3 302.7,406.1 303.0,404.6 303.4,377.4 303.7,405.8 304.0,405.1 304.4,377.8 304.7,408.8 305.0,382.8 305.4,411.0 305.7,403.8 306.0,405.2 306.3,384.1 306.7,402.8 307.0,381.3 307.3,411.0 307.7,380.5 308.0,411.0 308.3,378.4 308.7,411.0 309.0,411.0 309.3,377.3 309.6,403.0 310.0,378.5 310.3,378.6 310.6,408.1 311.0,380.5 311.3,400.6 311.6,377.2 312.0,410.0 312.3,380.6 312.6,405.3 312.9,383.8 313.3,406.8 313.6,380.5 313.9,411.0 314.3,384.2 314.6,411.0 314.9,380.9 315.3,404.8 315.6,382.5 315.9,409.4 316.2,384.3 316.6,401.8 316.9,379.6 317.2,408.1 317.6,380.9 317.9,400.3 318.2,379.0 318.6,410.2 318.9,377.6 319.2,407.8 319.5,384.5 319.9,407.2 320.2,411.0 320.5,383.4 320.9,404.3 321.2,380.8 321.5,409.0 321.9,380.7 322.2,404.9 322.5,380.8 322.8,403.4 323.2,383.4 323.5,411.0 323.8,382.2 324.2,411.0 324.5,383.1 324.8,411.0 325.2,378.8 325.5,400.7 325.8,379.6 326.1,409.9 326.5,384.2 326.8,401.3 327.1,377.7 327.5,411.0 327.8,378.3 328.1,411.0 328.5,381.8 328.8,382.6 329.1,383.7 329.4,411.0 329.8,381.3 330.1,410.3 330.4,379.9 330.8,400.7 331.1,383.1 331.4,410.5 331.8,382.3 332.1,405.3 332.4,378.3 332.7,411.0 333.1,379.5 333.4,411.0 333.7,384.3 334.1,411.0 334.4,379.5 334.7,408.5 335.1,377.2 335.4,408.7 335.7,382.7 336.0,403.4 336.4,378.8 336.7,401.4 337.0,405.9 337.4,384.3 337.7,406.8 338.0,378.7 338.4,411.0 338.7,407.1 339.0,382.8 339.3,410.3 339.7,383.9 340.0,408.8 340.3,381.0 340.7,411.0 341.0,402.7 341.3,379.0 341.7,411.0 342.0,382.9 342.3,411.0 342.6,380.3 343.0,380.6 343.3,411.0 343.6,401.4 344.0,382.3 344.3,402.3 344.6,381.4 345.0,406.6 345.3,382.2 345.6,401.0 345.9,377.9 346.3,380.6 346.6,377.5 346.9,407.6 347.3,411.0 347.6,380.7 347.9,405.3 348.3,377.8 348.6,403.8 348.9,380.9 349.2,406.6 349.6,378.9 349.9,411.0 350.2,379.7 350.6,407.4 350.9,381.8 351.2,405.1 351.6,380.4 351.9,411.0 352.2,379.8 352.5,411.0 352.9,380.0 353.2,411.0 353.5,382.5 353.9,410.6 354.2,380.3 354.5,403.9 354.9,381.1 355.2,405.7 355.5,377.0 355.8,411.0 356.2,381.7 356.5,406.5 356.8,378.4 357.2,401.3 357.5,383.3 357.8,406.4 358.2,382.4 358.5,411.0 358.8,378.9 359.1,409.1 359.5,384.6 359.8,383.0 360.1,411.0 360.5,379.0 360.8,408.6 361.1,378.2 361.5,411.0 361.8,379.1 362.1,406.9 362.4,409.8 362.8,381.0 363.1,409.2 363.4,379.6 363.8,401.5 364.1,382.3 364.4,411.0 364.8,379.0 365.1,408.7 365.4,406.2 365.7,378.0 366.1,411.0 366.4,378.8 366.7,402.2 367.1,411.0 367.4,379.0 367.7,411.0 368.1,411.0 368.4,378.5 368.7,411.0 369.0,383.7 369.4,407.7 369.7,380.3 370.0,409.2 370.4,384.6 370.7,403.8 371.0,378.1 371.4,405.7 371.7,380.3 372.0,411.0 372.3,378.2 372.7,411.0 373.0,383.8 373.3,403.9 373.7,378.7 374.0,401.1 374.3,377.4 374.7,408.8 375.0,377.6 375.3,379.6 375.6,409.7 376.0,377.4 376.3,377.0 376.6,403.1 377.0,382.1 377.3,405.4 377.6,379.1 378.0,405.9 378.3,378.8 378.6,404.4 378.9,405.2 379.3,379.0 379.6,383.5 379.9,408.3 380.3,383.8 380.6,410.1 380.9,382.3 381.3,406.8 381.6,380.8 381.9,408.6 382.2,383.0 382.6,403.8 382.9,405.0 383.2,411.0 383.6,379.1 383.9,411.0 384.2,382.2 384.6,411.0 384.9,380.0 385.2,411.0 385.5,384.0 385.9,401.5 386.2,384.5 386.5,408.4 386.9,383.6 387.2,411.0 387.5,411.0 387.9,402.6 388.2,381.9 388.5,381.3 388.8,407.1 389.2,381.5 389.5,403.0 389.8,383.9 390.2,403.7 390.5,381.1 390.8,409.3 391.2,377.0 391.5,410.6 391.8,377.5 392.1,405.5 392.5,381.3 392.8,381.9 393.1,411.0 393.5,382.8 393.8,377.2 394.1,402.5 394.5,377.1 394.8,407.7 395.1,379.4 395.4,411.0 395.8,381.8 396.1,411.0 396.4,409.1 396.8,383.3 397.1,411.0 397.4,380.8 397.8,404.1 398.1,384.1 398.4,401.4 398.7,378.7 399.1,411.0 399.4,384.5 399.7,410.1 400.1,382.5 400.4,401.2 400.7,379.9 401.1,401.1 401.4,411.0 401.7,379.5 402.0,381.5 402.4,403.1 402.7,380.8 403.0,409.2 403.4,378.4 403.7,401.5 404.0,377.1 404.4,407.6 404.7,381.7 405.0,411.0 405.3,377.3 405.7,402.6 406.0,377.2 406.3,383.7 406.7,401.7 407.0,411.0 407.3,384.0 407.7,377.8 408.0,403.3 408.3,403.5 408.6,378.2 409.0,408.7 409.3,378.1 409.6,408.3 410.0,380.6 410.3,381.7 410.6,405.6 411.0,411.0 411.3,379.9 411.6,411.0 411.9,406.3 412.3,379.8 412.6,411.0 412.9,404.8 413.3,382.7 413.6,411.0 413.9,378.3 414.3,411.0 414.6,377.8 414.9,411.0 415.2,379.7 415.6,411.0 415.9,381.4 416.2,411.0 416.6,382.0 416.9,402.6 417.2,381.3 417.6,383.0 417.9,381.8 418.2,405.4 418.5,378.4 418.9,411.0 419.2,378.9 419.5,411.0 419.9,383.5 420.2,409.0 420.5,376.9 420.9,376.9 421.2,404.6 421.5,381.9 421.8,382.5 422.2,407.8 422.5,383.6 422.8,406.9 423.2,380.0 423.5,411.0 423.8,382.2 424.2,411.0 424.5,378.5 424.8,402.9 425.1,406.8 425.5,382.6 425.8,410.9 426.1,377.3 426.5,377.2 426.8,411.0 427.1,381.2 427.5,406.1 427.8,410.3 428.1,403.9 428.4,402.8 428.8,408.6 429.1,409.7 429.4,379.6 429.8,382.1 430.1,411.0 430.4,381.4 430.8,410.9 431.1,379.1 431.4,410.2 431.7,377.0 432.1,404.4 432.4,380.9 432.7,401.2 433.1,409.8 433.4,384.6 433.7,404.9 434.1,380.8 434.4,406.5 434.7,380.7 435.0,407.8 435.4,384.7 435.7,380.0 436.0,382.2 436.4,402.7 436.7,381.6 437.0,407.3 437.4,379.8 437.7,403.7 438.0,411.0 438.3,377.9 438.7,383.8 439.0,401.3 439.3,378.6 439.7,409.8 440.0,411.0 440.3,378.0 440.7,402.0 441.0,410.5 441.3,383.9 441.6,403.5 442.0,409.7 442.3,379.2 442.6,403.6 443.0,377.5 443.3,411.0 443.6,379.4 444.0,411.0 444.3,377.2 444.6,402.5 444.9,384.3 445.3,404.2 445.6,379.4 445.9,411.0 446.3,379.5 446.6,411.0 446.9,380.5 447.3,377.6 447.6,411.0 447.9,381.9 448.2,406.1 448.6,384.5 448.9,402.3 449.2,381.6 449.6,411.0 449.9,383.7 450.2,406.7 450.6,379.8 450.9,406.0 451.2,379.6 451.5,411.0 451.9,382.2 452.2,406.4 452.5,378.8 452.9,401.9 453.2,384.1 453.5,406.2 453.9,402.5 454.2,383.9 454.5,378.9 454.8,403.9 455.2,379.6 455.5,403.5 455.8,380.2 456.2,411.0 456.5,410.3 456.8,379.4 457.2,402.2 457.5,411.0 457.8,377.0 458.1,409.7 458.5,377.2 458.8,405.8 459.1,379.7 459.5,411.0 459.8,377.9 460.1,401.7 460.5,377.6 460.8,380.1 461.1,411.0 461.4,383.9 461.8,411.0 462.1,380.6 462.4,410.8 462.8,381.0 463.1,408.4 463.4,382.3 463.8,411.0 464.1,377.6 464.4,377.3 464.7,411.0 465.1,380.3 465.4,409.1 465.7,383.0 466.1,411.0 466.4,376.9 466.7,401.8 467.1,377.4 467.4,411.0 467.7,382.1 468.0,408.5 468.4,380.5 468.7,410.9 469.0,402.5 469.4,381.0 469.7,400.4 470.0,383.4 470.4,402.8 470.7,384.5 471.0,411.0 471.3,384.2 471.7,402.2 472.0,378.7 472.3,411.0 472.7,377.9 473.0,404.1 473.3,382.5 473.7,407.2 474.0,380.5 474.3,407.4 474.6,382.4 475.0,409.2 475.3,401.0 475.6,379.7 476.0,377.5 476.3,411.0 476.6,377.1 477.0,406.1" fill="none" stroke="#b8343c" stroke-width="0.8" stroke-opacity="0.85"/><line x1="176.5" y1="343.7" x2="176.5" y2="388.6" stroke="#50649e" stroke-width="1.2"/><line x1="198.5" y1="353.5" x2="198.5" y2="388.6" stroke="#c23a40" stroke-width="1.2"/><line x1="209.5" y1="349.5" x2="209.5" y2="388.6" stroke="#50649e" stroke-width="1.2"/><line x1="228.5" y1="355.4" x2="228.5" y2="388.6" stroke="#50649e" stroke-width="1.2"/><line x1="245.5" y1="359.3" x2="245.5" y2="388.6" stroke="#c23a40" stroke-width="1.2"/><line x1="261.5" y1="365.2" x2="261.5" y2="388.6" stroke="#50649e" stroke-width="1.2"/><line x1="269.5" y1="355.4" x2="269.5" y2="388.6" stroke="#8a3045" stroke-width="1.2"/><line x1="278.5" y1="367.1" x2="278.5" y2="388.6" stroke="#50649e" stroke-width="1.2"/><line x1="336.5" y1="373.0" x2="336.5" y2="388.6" stroke="#c23a40" stroke-width="1.2"/><line x1="361.5" y1="373.0" x2="361.5" y2="388.6" stroke="#c23a40" stroke-width="1.2"/><line x1="406.5" y1="371.0" x2="406.5" y2="388.6" stroke="#c23a40" stroke-width="1.2"/><line x1="293.5" y1="134.7" x2="293.5" y2="412" stroke="#b03040" stroke-width="1.4"/><rect x="53.1" y="49.5" width="424.4" height="362" fill="none" stroke="#8c8c8c" stroke-width="1.5"/></svg>
<div style="position:absolute;left:755.00px;top:1237.70px;font:400 10px 'Liberation Mono',sans-serif;line-height:1;white-space:pre;color:#111;transform:scaleX(0.8881);transform-origin:0 0;-webkit-text-stroke:0.35px #111;">FFT</div>
<div style="position:absolute;left:543.20px;top:1255.25px;font:400 10.5px 'Liberation Sans',sans-serif;line-height:1;white-space:pre;color:#222;transform:scaleX(0.9583);transform-origin:0 0;">0</div>
<div style="position:absolute;left:532.00px;top:1274.78px;font:400 10.5px 'Liberation Sans',sans-serif;line-height:1;white-space:pre;color:#222;transform:scaleX(1.1062);transform-origin:0 0;">-10</div>
<div style="position:absolute;left:532.00px;top:1294.31px;font:400 10.5px 'Liberation Sans',sans-serif;line-height:1;white-space:pre;color:#222;transform:scaleX(1.1062);transform-origin:0 0;">-20</div>
<div style="position:absolute;left:532.00px;top:1313.84px;font:400 10.5px 'Liberation Sans',sans-serif;line-height:1;white-space:pre;color:#222;transform:scaleX(1.1062);transform-origin:0 0;">-30</div>
<div style="position:absolute;left:532.00px;top:1333.37px;font:400 10.5px 'Liberation Sans',sans-serif;line-height:1;white-space:pre;color:#222;transform:scaleX(1.1062);transform-origin:0 0;">-40</div>
<div style="position:absolute;left:532.00px;top:1352.90px;font:400 10.5px 'Liberation Sans',sans-serif;line-height:1;white-space:pre;color:#222;transform:scaleX(1.1062);transform-origin:0 0;">-50</div>
<div style="position:absolute;left:532.00px;top:1372.43px;font:400 10.5px 'Liberation Sans',sans-serif;line-height:1;white-space:pre;color:#222;transform:scaleX(1.1062);transform-origin:0 0;">-60</div>
<div style="position:absolute;left:532.00px;top:1391.96px;font:400 10.5px 'Liberation Sans',sans-serif;line-height:1;white-space:pre;color:#222;transform:scaleX(1.1062);transform-origin:0 0;">-70</div>
<div style="position:absolute;left:532.00px;top:1411.49px;font:400 10.5px 'Liberation Sans',sans-serif;line-height:1;white-space:pre;color:#222;transform:scaleX(1.1062);transform-origin:0 0;">-80</div>
<div style="position:absolute;left:532.00px;top:1431.02px;font:400 10.5px 'Liberation Sans',sans-serif;line-height:1;white-space:pre;color:#222;transform:scaleX(1.1062);transform-origin:0 0;">-90</div>
<div style="position:absolute;left:526.40px;top:1450.55px;font:400 10.5px 'Liberation Sans',sans-serif;line-height:1;white-space:pre;color:#222;transform:scaleX(1.0659);transform-origin:0 0;">-100</div>
<div style="position:absolute;left:526.40px;top:1470.08px;font:400 10.5px 'Liberation Sans',sans-serif;line-height:1;white-space:pre;color:#222;transform:scaleX(1.1062);transform-origin:0 0;">-110</div>
<div style="position:absolute;left:526.40px;top:1489.61px;font:400 10.5px 'Liberation Sans',sans-serif;line-height:1;white-space:pre;color:#222;transform:scaleX(1.0659);transform-origin:0 0;">-120</div>
<div style="position:absolute;left:526.40px;top:1509.14px;font:400 10.5px 'Liberation Sans',sans-serif;line-height:1;white-space:pre;color:#222;transform:scaleX(1.0659);transform-origin:0 0;">-130</div>
<div style="position:absolute;left:526.40px;top:1528.67px;font:400 10.5px 'Liberation Sans',sans-serif;line-height:1;white-space:pre;color:#222;transform:scaleX(1.0659);transform-origin:0 0;">-140</div>
<div style="position:absolute;left:526.40px;top:1548.20px;font:400 10.5px 'Liberation Sans',sans-serif;line-height:1;white-space:pre;color:#222;transform:scaleX(1.0659);transform-origin:0 0;">-150</div>
<div style="position:absolute;left:526.40px;top:1567.73px;font:400 10.5px 'Liberation Sans',sans-serif;line-height:1;white-space:pre;color:#222;transform:scaleX(1.0659);transform-origin:0 0;">-160</div>
<div style="position:absolute;left:526.40px;top:1587.26px;font:400 10.5px 'Liberation Sans',sans-serif;line-height:1;white-space:pre;color:#222;transform:scaleX(1.0659);transform-origin:0 0;">-170</div>
<div style="position:absolute;left:526.40px;top:1606.79px;font:400 10.5px 'Liberation Sans',sans-serif;line-height:1;white-space:pre;color:#222;transform:scaleX(1.0659);transform-origin:0 0;">-180</div>
<div style="position:absolute;left:546.80px;top:1615.45px;font:400 10.5px 'Liberation Sans',sans-serif;line-height:1;white-space:pre;color:#222;transform:scaleX(0.9925);transform-origin:0 0;">20</div>
<div style="position:absolute;left:571.77px;top:1615.45px;font:400 10.5px 'Liberation Sans',sans-serif;line-height:1;white-space:pre;color:#222;transform:scaleX(0.9925);transform-origin:0 0;">30</div>
<div style="position:absolute;left:603.23px;top:1615.45px;font:400 10.5px 'Liberation Sans',sans-serif;line-height:1;white-space:pre;color:#222;transform:scaleX(0.9925);transform-origin:0 0;">50</div>
<div style="position:absolute;left:643.01px;top:1615.45px;font:400 10.5px 'Liberation Sans',sans-serif;line-height:1;white-space:pre;color:#222;transform:scaleX(0.9925);transform-origin:0 0;">100</div>
<div style="position:absolute;left:685.70px;top:1615.45px;font:400 10.5px 'Liberation Sans',sans-serif;line-height:1;white-space:pre;color:#222;transform:scaleX(0.9925);transform-origin:0 0;">200</div>
<div style="position:absolute;left:710.67px;top:1615.45px;font:400 10.5px 'Liberation Sans',sans-serif;line-height:1;white-space:pre;color:#222;transform:scaleX(0.9925);transform-origin:0 0;">300</div>
<div style="position:absolute;left:742.13px;top:1615.45px;font:400 10.5px 'Liberation Sans',sans-serif;line-height:1;white-space:pre;color:#222;transform:scaleX(0.9925);transform-origin:0 0;">500</div>
<div style="position:absolute;left:787.71px;top:1615.45px;font:400 10.5px 'Liberation Sans',sans-serif;line-height:1;white-space:pre;color:#222;transform:scaleX(1.0456);transform-origin:0 0;">1k</div>
<div style="position:absolute;left:830.40px;top:1615.45px;font:400 10.5px 'Liberation Sans',sans-serif;line-height:1;white-space:pre;color:#222;transform:scaleX(1.0456);transform-origin:0 0;">2k</div>
<div style="position:absolute;left:855.37px;top:1615.45px;font:400 10.5px 'Liberation Sans',sans-serif;line-height:1;white-space:pre;color:#222;transform:scaleX(1.0456);transform-origin:0 0;">3k</div>
<div style="position:absolute;left:886.83px;top:1615.45px;font:400 10.5px 'Liberation Sans',sans-serif;line-height:1;white-space:pre;color:#222;transform:scaleX(1.0456);transform-origin:0 0;">5k</div>
<div style="position:absolute;left:926.61px;top:1615.45px;font:400 10.5px 'Liberation Sans',sans-serif;line-height:1;white-space:pre;color:#222;transform:scaleX(1.0273);transform-origin:0 0;">10k</div>
<div style="position:absolute;left:969.30px;top:1615.45px;font:400 10.5px 'Liberation Sans',sans-serif;line-height:1;white-space:pre;color:#222;transform:scaleX(1.0273);transform-origin:0 0;">20k</div>
<div style="position:absolute;left:730.00px;top:1627.05px;font:400 10.5px 'Liberation Sans',sans-serif;line-height:1;white-space:pre;color:#222;transform:scaleX(0.9121);transform-origin:0 0;">Frequency (Hz)</div>
<div style="position:absolute;left:420px;top:1425px;width:200px;height:10px;text-align:center;font:400 10px 'Liberation Sans';line-height:10px;color:#222;white-space:pre;transform:rotate(-90deg) scaleX(1.0);transform-origin:100px 5px;">Level (dBrA)</div>
<div style="position:absolute;left:0px;top:1643px;width:1000px;height:3px;background:#d9d9d9;"></div>
<div style="position:absolute;left:0px;top:1645.5px;width:1000px;height:7px;background:#4d7785;"></div>
<div style="position:absolute;left:501.00px;top:1644.50px;font:400 6px 'Liberation Sans',sans-serif;line-height:1;white-space:pre;color:#c8d6db;transform:scaleX(1.5842);transform-origin:0 0;">•••</div>
<div style="position:absolute;left:5px;top:1652.5px;width:995px;height:21.5px;background:#dcdcdc;"></div>
<svg style="position:absolute;left:7.3px;top:1657px;overflow:visible;" width="12.5" height="12.5" viewBox="0 0 12.5 12.5"><g transform="scale(0.9615384615384616)"><rect width="13" height="13" fill="#2f4b5d"/><path d="M6.5,2v9M2,6.5h9" stroke="#fff" stroke-width="1.8"/></g></svg>
<div style="position:absolute;left:23.30px;top:1657.15px;font:400 11.3px 'Liberation Sans',sans-serif;line-height:1;white-space:pre;color:#222;transform:scaleX(1.0149);transform-origin:0 0;">Add Meter</div>
<svg style="position:absolute;left:81px;top:1662px;overflow:visible;" width="5" height="3" viewBox="0 0 5 3"><path d="M0,0h5l-2.5,3z" fill="#222"/></svg>
<div style="position:absolute;left:93.7px;top:1656px;width:1px;height:14px;background:#b0b0b0;"></div>
<svg style="position:absolute;left:97.4px;top:1656.5px;overflow:visible;" width="13.5" height="13.5" viewBox="0 0 13.5 13.5"><g transform="scale(1.0384615384615385)"><rect width="13" height="13" fill="#2f4b5d"/><path d="M2,2.5h7v8h-7z" fill="none" stroke="#fff" stroke-width="1"/><path d="M3.5,5h3M3.5,7h3" stroke="#fff" stroke-width="0.8"/><path d="M7,7h4M9.5,5.5l1.5,1.5l-1.5,1.5" fill="none" stroke="#fff" stroke-width="1.1"/></g></svg>
<div style="position:absolute;left:113.40px;top:1657.15px;font:400 11.3px 'Liberation Sans',sans-serif;line-height:1;white-space:pre;color:#222;transform:scaleX(0.9674);transform-origin:0 0;">Save Meter Data</div>
<div style="position:absolute;left:205px;top:1656px;width:1px;height:14px;background:#b0b0b0;"></div>
<svg style="position:absolute;left:208.8px;top:1656.5px;overflow:visible;" width="13" height="13" viewBox="0 0 13 13"><g transform="scale(1.0)"><rect width="13" height="13" fill="#2f4b5d"/><path d="M4,2.5l6,4l-6,4z" fill="#fff"/></g></svg>
<div style="position:absolute;left:225.40px;top:1657.15px;font:400 11.3px 'Liberation Sans',sans-serif;line-height:1;white-space:pre;color:#222;transform:scaleX(0.9506);transform-origin:0 0;">Regulate</div>
<svg style="position:absolute;left:990px;top:1658px;overflow:visible;" width="10" height="10" viewBox="0 0 10 10"><path d="M0,9h10" stroke="#4a4f7a" stroke-width="1.3"/><path d="M5,1l-3,3h2v3h2v-3h2z" fill="#4a4f7a"/></svg>
<div style="position:absolute;left:5px;top:1674px;width:995px;height:282px;background:#d4d4d4;"></div>
<div style="position:absolute;left:8px;top:1676px;width:485px;height:21.8px;background:#dae4e7;"></div>
<div style="position:absolute;left:11.60px;top:1680.70px;font:700 14px 'Liberation Sans',sans-serif;line-height:1;white-space:pre;color:#111;transform:scaleX(0.9236);transform-origin:0 0;">RMS Level</div>
<div style="position:absolute;left:83.8px;top:1677px;width:63.10000000000001px;height:20px;background:#fff;"></div>
<div style="position:absolute;left:87.30px;top:1682.00px;font:400 11px 'Liberation Sans',sans-serif;line-height:1;white-space:pre;color:#222;transform:scaleX(0.9849);transform-origin:0 0;">dBrA</div>
<svg style="position:absolute;left:138.9px;top:1686.5px;overflow:visible;" width="5" height="3" viewBox="0 0 5 3"><path d="M0,0h5l-2.5,3z" fill="#222"/></svg>
<svg style="position:absolute;left:149.9px;top:1680.5px;overflow:visible;" width="14" height="14" viewBox="0 0 14 14"><g transform="scale(1.0769230769230769)"><rect width="13" height="13" fill="#2f4b5d"/><rect x="1.5" y="2" width="10" height="9" fill="#fff"/><rect x="2.5" y="3" width="8" height="5.5" fill="#2f4b5d"/><path d="M2.5,8.5l3,-3l2,2l3,-3.5v4.5z" fill="#7b93aa"/><path d="M2.5,8.2l3,-3l2,2l3,-3.5" fill="none" stroke="#fff" stroke-width="0.8"/></g></svg>
<svg style="position:absolute;left:166.9px;top:1686.5px;overflow:visible;" width="4" height="3" viewBox="0 0 4 3"><path d="M0,0h4l-2.0,3z" fill="#222"/></svg>
<svg style="position:absolute;left:175.9px;top:1680.5px;overflow:visible;" width="13.5" height="13.5" viewBox="0 0 13.5 13.5"><g transform="scale(1.0384615384615385)"><rect width="13" height="13" fill="#2f4b5d"/><circle cx="6.5" cy="6.5" r="3.6" fill="none" stroke="#fff" stroke-width="2.2" stroke-dasharray="1.6 1.2"/><circle cx="6.5" cy="6.5" r="2.6" fill="none" stroke="#fff" stroke-width="1.4"/></g></svg>
<div style="position:absolute;left:448px;top:1679px;width:1px;height:16px;background:#c0c8cb;"></div>
<svg style="position:absolute;left:457.5px;top:1681.5px;overflow:visible;" width="11" height="11" viewBox="0 0 11 11"><g transform="scale(0.8461538461538461)"><path d="M2,3h4M2,3v8h8v-4" fill="none" stroke="#1f4f8a" stroke-width="1.6"/><path d="M6,7l5,-5M7.5,1.5h4v4" fill="none" stroke="#1f4f8a" stroke-width="1.6"/></g></svg>
<svg style="position:absolute;left:476.5px;top:1682px;overflow:visible;" width="10.5" height="10.5" viewBox="0 0 10.5 10.5"><g transform="scale(0.8076923076923077)"><path d="M2.5,2.5l8,8M10.5,2.5l-8,8" stroke="#222" stroke-width="1.6"/></g></svg>
<div style="position:absolute;left:8px;top:1697.8px;width:485px;height:109.70000000000005px;background:#dce5e8;"></div>
<div style="position:absolute;left:12px;top:1753.747px;width:124px;height:1px;background:#a9b0b3;"></div>
<div style="position:absolute;left:14.00px;top:1715.77px;font:400 24.4px 'Liberation Sans',sans-serif;line-height:1;white-space:pre;color:#1a1a1a;transform:scaleX(0.9877);transform-origin:0 0;">Ch1</div>
<div style="position:absolute;left:14.00px;top:1770.07px;font:400 24.4px 'Liberation Sans',sans-serif;line-height:1;white-space:pre;color:#1a1a1a;transform:scaleX(0.9877);transform-origin:0 0;">Ch2</div>
<svg style="position:absolute;left:120.8px;top:1723.031px;overflow:visible;" width="9.5" height="8.5" viewBox="0 0 9.5 8.5"><path d="M0,0h9.5l-4.75,8.5z" fill="#111"/></svg>
<svg style="position:absolute;left:120.8px;top:1777.3325px;overflow:visible;" width="9.5" height="8.5" viewBox="0 0 9.5 8.5"><path d="M0,0h9.5l-4.75,8.5z" fill="#111"/></svg>
<div style="position:absolute;left:132.3px;top:1701.3px;width:352.9px;height:105.20000000000005px;background:#000;"></div>
<div style="position:absolute;left:301.70px;top:1707.89px;font:400 27px 'Liberation Sans',sans-serif;line-height:1;white-space:pre;color:#22dd22;transform:scaleX(0.9533);transform-origin:0 0;">-38.193</div>
<div style="position:absolute;left:423.40px;top:1707.89px;font:400 27px 'Liberation Sans',sans-serif;line-height:1;white-space:pre;color:#22dd22;transform:scaleX(0.9545);transform-origin:0 0;">dBrA</div>
<div style="position:absolute;left:132.3px;top:1737.292px;width:352.9px;height:14.3px;background:#8a8a8a;border:1px solid #c8c8c8;box-sizing:border-box;"></div>
<div style="position:absolute;left:133.3px;top:1738.292px;width:154.5px;height:4px;background:#22e622;"></div>
<div style="position:absolute;left:133.3px;top:1742.292px;width:292.2997px;height:2.8px;background:#000;"></div>
<div style="position:absolute;left:133.3px;top:1745.0919999999999px;width:154.5px;height:5.5px;background:#22e622;"></div>
<div style="position:absolute;left:301.70px;top:1775.90px;font:400 27px 'Liberation Sans',sans-serif;line-height:1;white-space:pre;color:#22dd22;transform:scaleX(0.9533);transform-origin:0 0;">-38.207</div>
<div style="position:absolute;left:423.40px;top:1775.90px;font:400 27px 'Liberation Sans',sans-serif;line-height:1;white-space:pre;color:#22dd22;transform:scaleX(0.9545);transform-origin:0 0;">dBrA</div>
<div style="position:absolute;left:132.3px;top:1755.941px;width:352.9px;height:14.3px;background:#8a8a8a;border:1px solid #c8c8c8;box-sizing:border-box;"></div>
<div style="position:absolute;left:133.3px;top:1756.941px;width:154.5px;height:4px;background:#22e622;"></div>
<div style="position:absolute;left:133.3px;top:1760.941px;width:292.2997px;height:2.8px;background:#000;"></div>
<div style="position:absolute;left:133.3px;top:1763.741px;width:154.5px;height:5.5px;background:#22e622;"></div>
<div style="position:absolute;left:132.3px;top:1751.5919999999999px;width:352.9px;height:4.34900000000016px;background:#c4c4c4;"></div>
<div style="position:absolute;left:498px;top:1676px;width:486px;height:21.8px;background:#dae4e7;"></div>
<div style="position:absolute;left:501.60px;top:1680.70px;font:700 14px 'Liberation Sans',sans-serif;line-height:1;white-space:pre;color:#111;transform:scaleX(0.9733);transform-origin:0 0;">SINAD</div>
<div style="position:absolute;left:550.4px;top:1677px;width:63.39999999999998px;height:20px;background:#fff;"></div>
<div style="position:absolute;left:553.90px;top:1682.00px;font:400 11px 'Liberation Sans',sans-serif;line-height:1;white-space:pre;color:#222;transform:scaleX(0.9652);transform-origin:0 0;">dB</div>
<svg style="position:absolute;left:605.8px;top:1686.5px;overflow:visible;" width="5" height="3" viewBox="0 0 5 3"><path d="M0,0h5l-2.5,3z" fill="#222"/></svg>
<svg style="position:absolute;left:616.8px;top:1680.5px;overflow:visible;" width="14" height="14" viewBox="0 0 14 14"><g transform="scale(1.0769230769230769)"><rect width="13" height="13" fill="#2f4b5d"/><rect x="1.5" y="2" width="10" height="9" fill="#fff"/><rect x="2.5" y="3" width="8" height="5.5" fill="#2f4b5d"/><path d="M2.5,8.5l3,-3l2,2l3,-3.5v4.5z" fill="#7b93aa"/><path d="M2.5,8.2l3,-3l2,2l3,-3.5" fill="none" stroke="#fff" stroke-width="0.8"/></g></svg>
<svg style="position:absolute;left:633.8px;top:1686.5px;overflow:visible;" width="4" height="3" viewBox="0 0 4 3"><path d="M0,0h4l-2.0,3z" fill="#222"/></svg>
<svg style="position:absolute;left:642.8px;top:1680.5px;overflow:visible;" width="13.5" height="13.5" viewBox="0 0 13.5 13.5"><g transform="scale(1.0384615384615385)"><rect width="13" height="13" fill="#2f4b5d"/><circle cx="6.5" cy="6.5" r="3.6" fill="none" stroke="#fff" stroke-width="2.2" stroke-dasharray="1.6 1.2"/><circle cx="6.5" cy="6.5" r="2.6" fill="none" stroke="#fff" stroke-width="1.4"/></g></svg>
<div style="position:absolute;left:939px;top:1679px;width:1px;height:16px;background:#c0c8cb;"></div>
<svg style="position:absolute;left:948.5px;top:1681.5px;overflow:visible;" width="11" height="11" viewBox="0 0 11 11"><g transform="scale(0.8461538461538461)"><path d="M2,3h4M2,3v8h8v-4" fill="none" stroke="#1f4f8a" stroke-width="1.6"/><path d="M6,7l5,-5M7.5,1.5h4v4" fill="none" stroke="#1f4f8a" stroke-width="1.6"/></g></svg>
<svg style="position:absolute;left:967.5px;top:1682px;overflow:visible;" width="10.5" height="10.5" viewBox="0 0 10.5 10.5"><g transform="scale(0.8076923076923077)"><path d="M2.5,2.5l8,8M10.5,2.5l-8,8" stroke="#222" stroke-width="1.6"/></g></svg>
<div style="position:absolute;left:498px;top:1697.8px;width:486px;height:109.70000000000005px;background:#dce5e8;"></div>
<div style="position:absolute;left:502px;top:1753.747px;width:124px;height:1px;background:#a9b0b3;"></div>
<div style="position:absolute;left:504.00px;top:1715.77px;font:400 24.4px 'Liberation Sans',sans-serif;line-height:1;white-space:pre;color:#1a1a1a;transform:scaleX(0.9877);transform-origin:0 0;">Ch1</div>
<div style="position:absolute;left:504.00px;top:1770.07px;font:400 24.4px 'Liberation Sans',sans-serif;line-height:1;white-space:pre;color:#1a1a1a;transform:scaleX(0.9877);transform-origin:0 0;">Ch2</div>
<svg style="position:absolute;left:610.8px;top:1723.031px;overflow:visible;" width="9.5" height="8.5" viewBox="0 0 9.5 8.5"><path d="M0,0h9.5l-4.75,8.5z" fill="#111"/></svg>
<svg style="position:absolute;left:610.8px;top:1777.3325px;overflow:visible;" width="9.5" height="8.5" viewBox="0 0 9.5 8.5"><path d="M0,0h9.5l-4.75,8.5z" fill="#111"/></svg>
<div style="position:absolute;left:622.3px;top:1701.3px;width:353.9000000000001px;height:105.20000000000005px;background:#000;"></div>
<div style="position:absolute;left:839.50px;top:1707.89px;font:400 27px 'Liberation Sans',sans-serif;line-height:1;white-space:pre;color:#22dd22;transform:scaleX(0.9262);transform-origin:0 0;">84.033</div>
<div style="position:absolute;left:940.00px;top:1707.89px;font:400 27px 'Liberation Sans',sans-serif;line-height:1;white-space:pre;color:#22dd22;transform:scaleX(0.9203);transform-origin:0 0;">dB</div>
<div style="position:absolute;left:622.3px;top:1737.292px;width:353.9000000000001px;height:14.3px;background:#8a8a8a;border:1px solid #c8c8c8;box-sizing:border-box;"></div>
<div style="position:absolute;left:623.3px;top:1738.292px;width:247.70000000000005px;height:4px;background:#22e622;"></div>
<div style="position:absolute;left:623.3px;top:1742.292px;width:351.9000000000001px;height:2.8px;background:#000;"></div>
<div style="position:absolute;left:623.3px;top:1745.0919999999999px;width:247.70000000000005px;height:5.5px;background:#22e622;"></div>
<div style="position:absolute;left:839.50px;top:1775.90px;font:400 27px 'Liberation Sans',sans-serif;line-height:1;white-space:pre;color:#22dd22;transform:scaleX(0.9262);transform-origin:0 0;">84.201</div>
<div style="position:absolute;left:940.00px;top:1775.90px;font:400 27px 'Liberation Sans',sans-serif;line-height:1;white-space:pre;color:#22dd22;transform:scaleX(0.9203);transform-origin:0 0;">dB</div>
<div style="position:absolute;left:622.3px;top:1755.941px;width:353.9000000000001px;height:14.3px;background:#8a8a8a;border:1px solid #c8c8c8;box-sizing:border-box;"></div>
<div style="position:absolute;left:623.3px;top:1756.941px;width:247.70000000000005px;height:4px;background:#22e622;"></div>
<div style="position:absolute;left:623.3px;top:1760.941px;width:351.9000000000001px;height:2.8px;background:#000;"></div>
<div style="position:absolute;left:623.3px;top:1763.741px;width:247.70000000000005px;height:5.5px;background:#22e622;"></div>
<div style="position:absolute;left:622.3px;top:1751.5919999999999px;width:353.9000000000001px;height:4.34900000000016px;background:#c4c4c4;"></div>
<div style="position:absolute;left:8px;top:1816px;width:485px;height:21.8px;background:#dae4e7;"></div>
<div style="position:absolute;left:11.60px;top:1820.70px;font:700 14px 'Liberation Sans',sans-serif;line-height:1;white-space:pre;color:#111;transform:scaleX(0.9136);transform-origin:0 0;">Bandpass Level</div>
<div style="position:absolute;left:116px;top:1817px;width:63px;height:20px;background:#fff;"></div>
<div style="position:absolute;left:119.50px;top:1822.00px;font:400 11px 'Liberation Sans',sans-serif;line-height:1;white-space:pre;color:#222;transform:scaleX(0.9499);transform-origin:0 0;">Vrms</div>
<svg style="position:absolute;left:171px;top:1826.5px;overflow:visible;" width="5" height="3" viewBox="0 0 5 3"><path d="M0,0h5l-2.5,3z" fill="#222"/></svg>
<svg style="position:absolute;left:182px;top:1820.5px;overflow:visible;" width="14" height="14" viewBox="0 0 14 14"><g transform="scale(1.0769230769230769)"><rect width="13" height="13" fill="#2f4b5d"/><rect x="1.5" y="2" width="10" height="9" fill="#fff"/><rect x="2.5" y="3" width="8" height="5.5" fill="#2f4b5d"/><path d="M2.5,8.5l3,-3l2,2l3,-3.5v4.5z" fill="#7b93aa"/><path d="M2.5,8.2l3,-3l2,2l3,-3.5" fill="none" stroke="#fff" stroke-width="0.8"/></g></svg>
<svg style="position:absolute;left:199px;top:1826.5px;overflow:visible;" width="4" height="3" viewBox="0 0 4 3"><path d="M0,0h4l-2.0,3z" fill="#222"/></svg>
<svg style="position:absolute;left:208px;top:1820.5px;overflow:visible;" width="13.5" height="13.5" viewBox="0 0 13.5 13.5"><g transform="scale(1.0384615384615385)"><rect width="13" height="13" fill="#2f4b5d"/><circle cx="6.5" cy="6.5" r="3.6" fill="none" stroke="#fff" stroke-width="2.2" stroke-dasharray="1.6 1.2"/><circle cx="6.5" cy="6.5" r="2.6" fill="none" stroke="#fff" stroke-width="1.4"/></g></svg>
<div style="position:absolute;left:448px;top:1819px;width:1px;height:16px;background:#c0c8cb;"></div>
<svg style="position:absolute;left:457.5px;top:1821.5px;overflow:visible;" width="11" height="11" viewBox="0 0 11 11"><g transform="scale(0.8461538461538461)"><path d="M2,3h4M2,3v8h8v-4" fill="none" stroke="#1f4f8a" stroke-width="1.6"/><path d="M6,7l5,-5M7.5,1.5h4v4" fill="none" stroke="#1f4f8a" stroke-width="1.6"/></g></svg>
<svg style="position:absolute;left:476.5px;top:1822px;overflow:visible;" width="10.5" height="10.5" viewBox="0 0 10.5 10.5"><g transform="scale(0.8076923076923077)"><path d="M2.5,2.5l8,8M10.5,2.5l-8,8" stroke="#222" stroke-width="1.6"/></g></svg>
<div style="position:absolute;left:8px;top:1837.8px;width:485px;height:113.20000000000005px;background:#dce5e8;"></div>
<div style="position:absolute;left:12px;top:1895.532px;width:124px;height:1px;background:#a9b0b3;"></div>
<div style="position:absolute;left:14.00px;top:1856.73px;font:400 24.4px 'Liberation Sans',sans-serif;line-height:1;white-space:pre;color:#1a1a1a;transform:scaleX(0.9877);transform-origin:0 0;">Ch1</div>
<div style="position:absolute;left:14.00px;top:1912.76px;font:400 24.4px 'Liberation Sans',sans-serif;line-height:1;white-space:pre;color:#1a1a1a;transform:scaleX(0.9877);transform-origin:0 0;">Ch2</div>
<svg style="position:absolute;left:120.8px;top:1863.836px;overflow:visible;" width="9.5" height="8.5" viewBox="0 0 9.5 8.5"><path d="M0,0h9.5l-4.75,8.5z" fill="#111"/></svg>
<svg style="position:absolute;left:120.8px;top:1919.87px;overflow:visible;" width="9.5" height="8.5" viewBox="0 0 9.5 8.5"><path d="M0,0h9.5l-4.75,8.5z" fill="#111"/></svg>
<div style="position:absolute;left:132.3px;top:1841.3px;width:352.9px;height:108.70000000000005px;background:#000;"></div>
<div style="position:absolute;left:292.00px;top:1848.64px;font:400 27px 'Liberation Sans',sans-serif;line-height:1;white-space:pre;color:#22dd22;transform:scaleX(0.9101);transform-origin:0 0;">50.25</div>
<div style="position:absolute;left:396.00px;top:1848.64px;font:400 27px 'Liberation Sans',sans-serif;line-height:1;white-space:pre;color:#22dd22;transform:scaleX(0.9931);transform-origin:0 0;">mVrms</div>
<div style="position:absolute;left:132.3px;top:1878.552px;width:352.9px;height:14.3px;background:#8a8a8a;border:1px solid #c8c8c8;box-sizing:border-box;"></div>
<div style="position:absolute;left:133.3px;top:1879.552px;width:154.5px;height:4px;background:#22e622;"></div>
<div style="position:absolute;left:133.3px;top:1883.552px;width:292.2997px;height:2.8px;background:#000;"></div>
<div style="position:absolute;left:133.3px;top:1886.3519999999999px;width:154.5px;height:5.5px;background:#22e622;"></div>
<div style="position:absolute;left:292.00px;top:1918.82px;font:400 27px 'Liberation Sans',sans-serif;line-height:1;white-space:pre;color:#22dd22;transform:scaleX(0.9101);transform-origin:0 0;">50.18</div>
<div style="position:absolute;left:396.00px;top:1918.82px;font:400 27px 'Liberation Sans',sans-serif;line-height:1;white-space:pre;color:#22dd22;transform:scaleX(0.9931);transform-origin:0 0;">mVrms</div>
<div style="position:absolute;left:132.3px;top:1897.796px;width:352.9px;height:14.3px;background:#8a8a8a;border:1px solid #c8c8c8;box-sizing:border-box;"></div>
<div style="position:absolute;left:133.3px;top:1898.796px;width:154.5px;height:4px;background:#22e622;"></div>
<div style="position:absolute;left:133.3px;top:1902.796px;width:292.2997px;height:2.8px;background:#000;"></div>
<div style="position:absolute;left:133.3px;top:1905.596px;width:154.5px;height:5.5px;background:#22e622;"></div>
<div style="position:absolute;left:132.3px;top:1892.8519999999999px;width:352.9px;height:4.944000000000187px;background:#c4c4c4;"></div>
<div style="position:absolute;left:500.4px;top:1817.5px;width:482.2px;height:132px;background:#acacac;border:1.5px solid #333;box-sizing:border-box;"></div>
<svg style="position:absolute;left:697px;top:1878px;overflow:visible;" width="12.5" height="12.5" viewBox="0 0 12.5 12.5"><g transform="scale(0.9615384615384616)"><rect width="13" height="13" fill="#2f4b5d"/><path d="M6.5,2v9M2,6.5h9" stroke="#fff" stroke-width="1.8"/></g></svg>
<div style="position:absolute;left:713.00px;top:1878.60px;font:400 11.8px 'Liberation Sans',sans-serif;line-height:1;white-space:pre;color:#222;transform:scaleX(1.0690);transform-origin:0 0;">Add meter...</div>
<div style="position:absolute;left:0px;top:1955px;width:1000px;height:21px;background:#f0f0f0;"></div>
<div style="position:absolute;left:290.00px;top:1960.50px;font:400 11px 'Liberation Sans',sans-serif;line-height:1;white-space:pre;color:#222;">Output:</div>
<div style="position:absolute;left:333px;top:1958.5px;width:158px;height:15px;background:#000;"></div>
<div style="position:absolute;left:335.00px;top:1960.50px;font:400 11px 'Liberation Sans',sans-serif;line-height:1;white-space:pre;color:#2bdc2b;transform:scaleX(1.0113);transform-origin:0 0;">Analog Balanced 2 Ch, 40 ohm</div>
<div style="position:absolute;left:497.00px;top:1960.50px;font:400 11px 'Liberation Sans',sans-serif;line-height:1;white-space:pre;color:#222;transform:scaleX(1.0081);transform-origin:0 0;">Input 1:</div>
<div style="position:absolute;left:540px;top:1958.5px;width:171px;height:15px;background:#000;"></div>
<div style="position:absolute;left:542.00px;top:1960.50px;font:400 11px 'Liberation Sans',sans-serif;line-height:1;white-space:pre;color:#2bdc2b;transform:scaleX(1.0190);transform-origin:0 0;">Analog Balanced 2 Ch, 200 kohm</div>
<div style="position:absolute;left:714px;top:1958.5px;width:69px;height:15px;background:#000;"></div>
<div style="position:absolute;left:716.00px;top:1960.50px;font:400 11px 'Liberation Sans',sans-serif;line-height:1;white-space:pre;color:#2bdc2b;">310.0 mVrms</div>
<div style="position:absolute;left:786px;top:1958.5px;width:121px;height:15px;background:#000;"></div>
<div style="position:absolute;left:788.00px;top:1960.50px;font:400 11px 'Liberation Sans',sans-serif;line-height:1;white-space:pre;color:#2bdc2b;transform:scaleX(1.0262);transform-origin:0 0;">AC (&lt;10 Hz) - 22.4 kHz</div>
<div style="position:absolute;left:913.00px;top:1960.50px;font:400 11px 'Liberation Sans',sans-serif;line-height:1;white-space:pre;color:#222;transform:scaleX(1.0353);transform-origin:0 0;">Input 2:</div>
<div style="position:absolute;left:957px;top:1958.5px;width:34px;height:15px;background:#000;"></div>
<div style="position:absolute;left:959.00px;top:1960.50px;font:400 11px 'Liberation Sans',sans-serif;line-height:1;white-space:pre;color:#2bdc2b;transform:scaleX(1.1408);transform-origin:0 0;">None</div>
<div style="position:absolute;left:0px;top:1144px;width:5px;height:811px;background:#4d7785;"></div>
<div style="position:absolute;left:0px;top:2142px;width:3px;height:12px;background:#6c9ea8;"></div>
<div style="position:absolute;left:12.80px;top:2151.50px;font:400 15px 'Liberation Sans',sans-serif;line-height:1;white-space:pre;color:#222;transform:scaleX(1.0351);transform-origin:0 0;">Signal to Noise Ratio</div>
<div style="position:absolute;left:855.2px;top:2158px;width:12.1px;height:1.3px;background:#222;"></div>
<div style="position:absolute;left:908.6px;top:2152.5px;width:12.4px;height:11.7px;background:transparent;border:1.4px solid #222;box-sizing:border-box;"></div>
<svg style="position:absolute;left:963px;top:2152px;overflow:visible;" width="13" height="13" viewBox="0 0 13 13"><path d="M0.5,0.5L12.5,12.5M12.5,0.5L0.5,12.5" stroke="#222" stroke-width="1.3"/></svg>
<div style="position:absolute;left:3px;top:2177.2px;width:993.2px;height:29.2px;background:#d8dfe2;"></div>
<svg style="position:absolute;left:5.8px;top:2182.5px;overflow:visible;" width="19" height="19" viewBox="0 0 19 19"><g transform="scale(1.4615384615384615)"><rect width="13" height="13" fill="#2f4b5d"/><path d="M2,1.5h9v10h-9z" fill="#fff"/><rect x="4.3" y="1.5" width="4.4" height="3.3" fill="#2f4b5d"/><rect x="3.6" y="6.3" width="5.8" height="5.2" fill="#2f4b5d"/><path d="M6.5,6.8v3.6M4.9,8.6l1.6,1.8l1.6,-1.8" fill="none" stroke="#fff" stroke-width="1.2"/></g></svg>
<svg style="position:absolute;left:33.6px;top:2182.5px;overflow:visible;" width="19" height="19" viewBox="0 0 19 19"><g transform="scale(1.4615384615384615)"><rect width="13" height="13" fill="#2f4b5d"/><path d="M2.5,4.5l2,-2h4v3" fill="none" stroke="#fff" stroke-width="1.2"/><path d="M2.5,4.5v4h3" fill="none" stroke="#fff" stroke-width="1.2"/><path d="M5.5,5h5.5v6.5h-5.5z" fill="#fff"/><path d="M5.5,5l2,2" stroke="#2f4b5d" stroke-width="0.9"/></g></svg>
<svg style="position:absolute;left:60.4px;top:2182.5px;overflow:visible;" width="19" height="19" viewBox="0 0 19 19"><g transform="scale(1.4615384615384615)"><rect width="13" height="13" fill="#2f4b5d"/><path d="M4,2h5v3h-5z" fill="none" stroke="#fff" stroke-width="1.1"/><path d="M1.5,5h10v5h-10z" fill="#fff"/><path d="M3.5,8h6v3.5h-6z" fill="#fff" stroke="#2f4b5d" stroke-width="0.8"/></g></svg>
<svg style="position:absolute;left:95.3px;top:2182.5px;overflow:visible;" width="19" height="19" viewBox="0 0 19 19"><g transform="scale(1.4615384615384615)"><rect width="13" height="13" fill="#2f4b5d"/><circle cx="5.5" cy="5.5" r="3.2" fill="none" stroke="#fff" stroke-width="1.3"/><path d="M8,8l3,3M4,5.5h3M5.5,4v3" stroke="#fff" stroke-width="1.2"/></g></svg>
<svg style="position:absolute;left:122.5px;top:2182.5px;overflow:visible;" width="19" height="19" viewBox="0 0 19 19"><g transform="scale(1.4615384615384615)"><rect width="13" height="13" fill="#2f4b5d"/><path d="M6.5,1.5v10M1.5,6.5h10" stroke="#fff" stroke-width="1.4"/><path d="M6.5,1l-2,2h4zM6.5,12l-2,-2h4zM1,6.5l2,-2v4zM12,6.5l-2,-2v4z" fill="#fff"/></g></svg>
<svg style="position:absolute;left:149.5px;top:2182.5px;overflow:visible;" width="19" height="19" viewBox="0 0 19 19"><g transform="scale(1.4615384615384615)"><rect width="13" height="13" fill="#2f4b5d"/><path d="M2,2l3.5,3.5M11,2l-3.5,3.5M2,11l3.5,-3.5M11,11l-3.5,-3.5" stroke="#fff" stroke-width="1.3"/><path d="M1.5,1.5h3.5l-3.5,3.5zM11.5,1.5v3.5l-3.5,-3.5zM1.5,11.5v-3.5l3.5,3.5zM11.5,11.5h-3.5l3.5,-3.5z" fill="#fff"/></g></svg>
<svg style="position:absolute;left:184.3px;top:2182.5px;overflow:visible;" width="19" height="19" viewBox="0 0 19 19"><g transform="scale(1.4615384615384615)"><rect width="13" height="13" fill="#2f4b5d"/><path d="M2,2h9v9h-9z" fill="none" stroke="#fff" stroke-width="1"/><rect x="2" y="2" width="9" height="2.4" fill="#fff"/><path d="M2,6.4h9M2,8.6h9M4.3,4v7M6.5,4v7M8.7,4v7" stroke="#fff" stroke-width="0.8"/></g></svg>
<svg style="position:absolute;left:210.3px;top:2182.5px;overflow:visible;" width="19" height="19" viewBox="0 0 19 19"><g transform="scale(1.4615384615384615)"><rect width="13" height="13" fill="#2f4b5d"/><rect x="1.5" y="2" width="10" height="9" fill="#fff"/><rect x="2.5" y="3" width="8" height="5.5" fill="#2f4b5d"/><path d="M2.5,8.5l3,-3l2,2l3,-3.5v4.5z" fill="#7b93aa"/><path d="M2.5,8.2l3,-3l2,2l3,-3.5" fill="none" stroke="#fff" stroke-width="0.8"/></g></svg>
<svg style="position:absolute;left:246px;top:2182.5px;overflow:visible;" width="19" height="19" viewBox="0 0 19 19"><g transform="scale(1.4615384615384615)"><rect width="13" height="13" fill="#2f4b5d"/><text x="2.3" y="10.3" font-family="Liberation Serif" font-style="italic" font-size="10.5" fill="#fff">f</text><text x="6.3" y="10.8" font-family="Liberation Sans" font-size="6.5" fill="#fff">x</text></g></svg>
<svg style="position:absolute;left:272px;top:2182.5px;overflow:visible;" width="19" height="19" viewBox="0 0 19 19"><g transform="scale(1.4615384615384615)"><rect width="13" height="13" fill="#2f4b5d"/><circle cx="6.5" cy="6.5" r="3.6" fill="none" stroke="#fff" stroke-width="2.2" stroke-dasharray="1.6 1.2"/><circle cx="6.5" cy="6.5" r="2.6" fill="none" stroke="#fff" stroke-width="1.4"/></g></svg>
<div style="position:absolute;left:88.6px;top:2180px;width:1px;height:24px;background:#b3bcc0;"></div>
<div style="position:absolute;left:176.7px;top:2180px;width:1px;height:24px;background:#b3bcc0;"></div>
<div style="position:absolute;left:299.8px;top:2180px;width:1px;height:24px;background:#b3bcc0;"></div>
<svg style="position:absolute;left:232.6px;top:2189.5px;overflow:visible;" width="5.5" height="3.5" viewBox="0 0 5.5 3.5"><path d="M0,0h5.5l-2.75,3.5z" fill="#222"/></svg>
<div style="position:absolute;left:308.70px;top:2184.00px;font:400 15px 'Liberation Sans',sans-serif;line-height:1;white-space:pre;color:#222;transform:scaleX(1.0117);transform-origin:0 0;">Unit</div>
<div style="position:absolute;left:342.3px;top:2178.2px;width:55.5px;height:27.5px;background:#fff;"></div>
<div style="position:absolute;left:348.00px;top:2185.00px;font:400 15px 'Liberation Sans',sans-serif;line-height:1;white-space:pre;color:#222;transform:scaleX(0.9804);transform-origin:0 0;">dB</div>
<svg style="position:absolute;left:384px;top:2191px;overflow:visible;" width="5.5" height="3.5" viewBox="0 0 5.5 3.5"><path d="M0,0h5.5l-2.75,3.5z" fill="#222"/></svg>
<svg style="position:absolute;left:974px;top:2184.7px;overflow:visible;" width="14" height="14" viewBox="0 0 14 14"><g transform="scale(1.0769230769230769)"><path d="M2,3h4M2,3v8h8v-4" fill="none" stroke="#1f4f8a" stroke-width="1.6"/><path d="M11,2l-5,5M5.5,3.5v4h4" fill="none" stroke="#1f4f8a" stroke-width="1.6"/></g></svg>
<div style="position:absolute;left:996.6px;top:2142px;width:1.2px;height:739px;background:#555;"></div>
<div style="position:absolute;left:320.80px;top:2209.75px;font:400 11.5px 'Liberation Mono',sans-serif;line-height:1;white-space:pre;color:#111;transform:scaleX(1.0339);transform-origin:0 0;-webkit-text-stroke:0.4px #111;">Signal to Noise Ratio  5Vrms in</div>
<div style="position:absolute;left:623.50px;top:2226.75px;font:400 13.5px 'Liberation Sans',sans-serif;line-height:1;white-space:pre;color:#333;transform:scaleX(1.0695);transform-origin:0 0;">2020/10/15 17:11:01.365</div>
<svg style="position:absolute;left:77.7px;top:2245.3px;overflow:visible;" width="707.8" height="571.6999999999998" viewBox="0 0 707.8 571.6999999999998"><rect x="0" y="100.69999999999982" width="609.3" height="143" fill="#485e98"/><rect x="0" y="329.0" width="609.2" height="142.5" fill="#cf5552"/><line x1="50.8" y1="0" x2="50.8" y2="571.6999999999998" stroke="#000" stroke-opacity="0.08" stroke-width="1"/><line x1="100.8" y1="0" x2="100.8" y2="571.6999999999998" stroke="#000" stroke-opacity="0.16" stroke-width="1"/><line x1="151.8" y1="0" x2="151.8" y2="571.6999999999998" stroke="#000" stroke-opacity="0.08" stroke-width="1"/><line x1="201.8" y1="0" x2="201.8" y2="571.6999999999998" stroke="#000" stroke-opacity="0.16" stroke-width="1"/><line x1="252.8" y1="0" x2="252.8" y2="571.6999999999998" stroke="#000" stroke-opacity="0.08" stroke-width="1"/><line x1="303.8" y1="0" x2="303.8" y2="571.6999999999998" stroke="#000" stroke-opacity="0.16" stroke-width="1"/><line x1="353.8" y1="0" x2="353.8" y2="571.6999999999998" stroke="#000" stroke-opacity="0.08" stroke-width="1"/><line x1="404.8" y1="0" x2="404.8" y2="571.6999999999998" stroke="#000" stroke-opacity="0.16" stroke-width="1"/><line x1="454.8" y1="0" x2="454.8" y2="571.6999999999998" stroke="#000" stroke-opacity="0.08" stroke-width="1"/><line x1="505.8" y1="0" x2="505.8" y2="571.6999999999998" stroke="#000" stroke-opacity="0.16" stroke-width="1"/><line x1="555.8" y1="0" x2="555.8" y2="571.6999999999998" stroke="#000" stroke-opacity="0.08" stroke-width="1"/><line x1="606.8" y1="0" x2="606.8" y2="571.6999999999998" stroke="#000" stroke-opacity="0.16" stroke-width="1"/><line x1="656.8" y1="0" x2="656.8" y2="571.6999999999998" stroke="#000" stroke-opacity="0.08" stroke-width="1"/><line x1="0" y1="172.2" x2="707.8" y2="172.2" stroke="#000" stroke-opacity="0.1" stroke-width="1"/><line x1="0" y1="400.2" x2="707.8" y2="400.2" stroke="#000" stroke-opacity="0.1" stroke-width="1"/><path d="M0.6,0V571.0999999999998H707.1999999999999V0H0.6" fill="none" stroke="#7a7a7a" stroke-width="1.4"/></svg>
<svg style="position:absolute;left:745.5px;top:2255px;overflow:visible;" width="30" height="20" viewBox="0 0 30 20"><path d="M19,2 C28,2 30,9.5 25.5,14.5 C22.5,18 16,19 10.5,18" fill="none" stroke="#1f66ae" stroke-width="2.1"/><text x="1.5" y="16" font-family="Liberation Sans" font-style="italic" font-weight="700" font-size="15" fill="#1f66ae">Ap</text></svg>
<div style="position:absolute;left:16.80px;top:2404.50px;font:400 27px 'Liberation Sans',sans-serif;line-height:1;white-space:pre;color:#111;transform:scaleX(0.9893);transform-origin:0 0;">Ch1</div>
<div style="position:absolute;left:16.80px;top:2632.80px;font:400 27px 'Liberation Sans',sans-serif;line-height:1;white-space:pre;color:#111;transform:scaleX(0.9893);transform-origin:0 0;">Ch2</div>
<div style="position:absolute;left:789.3px;top:2409px;width:18.7px;height:18px;background:#4a6098;"></div>
<div style="position:absolute;left:835.00px;top:2403.50px;font:400 30px 'Liberation Sans',sans-serif;line-height:1;white-space:pre;color:#111;transform:scaleX(0.9819);transform-origin:0 0;">120.508 dB</div>
<div style="position:absolute;left:789.3px;top:2636px;width:18.7px;height:17.8px;background:#d05553;"></div>
<div style="position:absolute;left:835.00px;top:2630.30px;font:400 30px 'Liberation Sans',sans-serif;line-height:1;white-space:pre;color:#111;transform:scaleX(0.9819);transform-origin:0 0;">120.500 dB</div>
<div style="position:absolute;left:69.90px;top:2829.20px;font:400 28px 'Liberation Sans',sans-serif;line-height:1;white-space:pre;color:#111;">0</div>
<div style="position:absolute;left:163.21px;top:2829.20px;font:400 28px 'Liberation Sans',sans-serif;line-height:1;white-space:pre;color:#111;">20</div>
<div style="position:absolute;left:264.33px;top:2829.20px;font:400 28px 'Liberation Sans',sans-serif;line-height:1;white-space:pre;color:#111;">40</div>
<div style="position:absolute;left:365.44px;top:2829.20px;font:400 28px 'Liberation Sans',sans-serif;line-height:1;white-space:pre;color:#111;">60</div>
<div style="position:absolute;left:466.56px;top:2829.20px;font:400 28px 'Liberation Sans',sans-serif;line-height:1;white-space:pre;color:#111;">80</div>
<div style="position:absolute;left:559.87px;top:2829.20px;font:400 28px 'Liberation Sans',sans-serif;line-height:1;white-space:pre;color:#111;">100</div>
<div style="position:absolute;left:660.99px;top:2829.20px;font:400 28px 'Liberation Sans',sans-serif;line-height:1;white-space:pre;color:#111;">120</div>
<div style="position:absolute;left:762.10px;top:2829.20px;font:400 28px 'Liberation Sans',sans-serif;line-height:1;white-space:pre;color:#111;">140</div>
<div style="position:absolute;left:352.00px;top:2863.25px;font:400 13.5px 'Liberation Sans',sans-serif;line-height:1;white-space:pre;color:#333;transform:scaleX(1.0224);transform-origin:0 0;">Signal to Noise Ratio (dB)</div>
<div style="position:absolute;left:0px;top:2878px;width:996.6px;height:1.2px;background:#c8c8c8;"></div>
</body></html>
